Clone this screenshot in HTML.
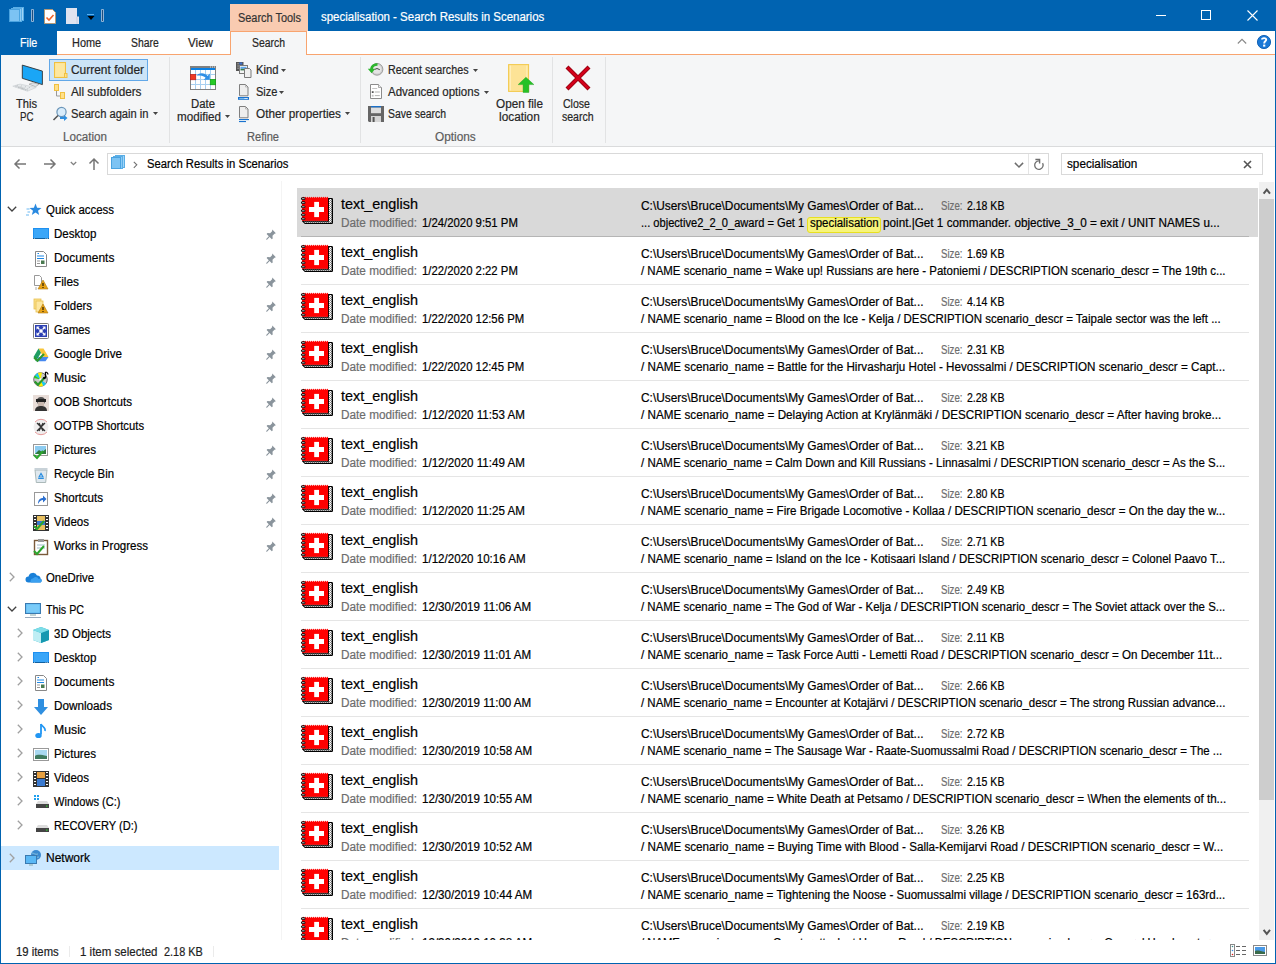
<!DOCTYPE html>
<html><head><meta charset="utf-8"><title>specialisation - Search Results in Scenarios</title>
<style>html,body{margin:0;padding:0;width:1276px;height:964px;overflow:hidden;background:#fff;}
#win{position:relative;width:1276px;height:964px;overflow:hidden;font-family:"Liberation Sans",sans-serif;}
.t{position:absolute;white-space:pre;transform-origin:0 0;-webkit-text-stroke:0.2px currentColor;}
.r{position:absolute;}
.i{position:absolute;overflow:visible;}
</style></head><body>
<div id="win">
<div class="r" style="left:0px;top:0px;width:1276px;height:964px;background:#fff;"></div><div class="r" style="left:0px;top:0px;width:1276px;height:31px;background:#0063b1;"></div><svg class="i" style="left:9px;top:6px;" width="16" height="16" viewBox="0 0 16 16">
<rect x="4.5" y="1.5" width="10" height="13" fill="#9fd4f7" stroke="#5aaee6"/>
<rect x="2.5" y="2.5" width="10" height="13" fill="#8ccbf5" stroke="#5aaee6"/>
<rect x="0.5" y="3.5" width="10" height="12" fill="#7cc3f3" stroke="#4aa3e0"/>
</svg><div class="r" style="left:31px;top:9px;width:3px;height:13px;background:#8fb3d6;border-radius:1px;"></div><div class="r" style="left:32px;top:10px;width:1px;height:11px;background:#1f4f7f;"></div><svg class="i" style="left:43px;top:8px;" width="14" height="17" viewBox="0 0 14 17">
<path d="M1.5 1.5h8l3 3v11h-11z" fill="#fff" stroke="#b59a78"/>
<path d="M3.5 9.5l2.5 2.5 4.5-5" fill="none" stroke="#f0642a" stroke-width="1.6"/>
</svg><svg class="i" style="left:66px;top:8px;" width="14" height="16" viewBox="0 0 14 16">
<path d="M0 0h11v8.5h2v7.5h-13z" fill="#dfe3f0"/>
<path d="M11 9v7" stroke="#c5cbe0"/>
</svg><div class="r" style="left:87px;top:14px;width:7px;height:1px;background:#5ab0f0;"></div><svg class="i" style="left:87px;top:15px;" width="8" height="6" viewBox="0 0 8 6"><path d="M0.5 1h7l-3.5 4z" fill="#000"/></svg><div class="r" style="left:101px;top:9px;width:3px;height:13px;background:#8fb3d6;border-radius:1px;"></div><div class="r" style="left:102px;top:10px;width:1px;height:11px;background:#1f4f7f;"></div><div class="t " style="left:321px;top:8.74px;font-size:12px;line-height:16px;color:#fff;transform:scaleX(0.9565);">specialisation - Search Results in Scenarios</div><div class="r" style="left:1156px;top:15px;width:10px;height:1px;background:#fff;"></div><div class="r" style="left:1201px;top:10px;width:10px;height:10px;background:transparent;box-sizing:border-box;border:1px solid #fff;"></div><svg class="i" style="left:1247px;top:10px;" width="11" height="11" viewBox="0 0 11 11"><path d="M0.5 0.5l10 10M10.5 0.5l-10 10" stroke="#fff" stroke-width="1.1"/></svg><div class="r" style="left:1px;top:31px;width:1274px;height:23px;background:#fff;"></div><div class="r" style="left:0px;top:31px;width:57px;height:24px;background:#0063b1;"></div><div class="t " style="left:20.3px;top:34.64px;font-size:12px;line-height:16px;color:#fff;transform:scaleX(0.8943);">File</div><div class="t " style="left:71.5px;top:34.64px;font-size:12px;line-height:16px;color:#262626;transform:scaleX(0.9089);">Home</div><div class="t " style="left:130.7px;top:34.64px;font-size:12px;line-height:16px;color:#262626;transform:scaleX(0.8648);">Share</div><div class="t " style="left:188px;top:34.64px;font-size:12px;line-height:16px;color:#262626;transform:scaleX(0.9691);">View</div><div class="r" style="left:230px;top:4px;width:78px;height:27px;background:#f9cbb1;"></div><div class="t " style="left:238px;top:9.64px;font-size:12px;line-height:16px;color:#333;transform:scaleX(0.9110);">Search Tools</div><div class="r" style="left:57px;top:54px;width:1218px;height:1px;background:#f8a46f;"></div><div class="r" style="left:230px;top:31px;width:77px;height:24px;background:#f5f6f7;box-sizing:border-box;border:1px solid #f8a46f;border-bottom:none;"></div><div class="t " style="left:251.5px;top:34.64px;font-size:12px;line-height:16px;color:#262626;transform:scaleX(0.8677);">Search</div><svg class="i" style="left:1237px;top:38px;" width="10" height="7" viewBox="0 0 10 7"><path d="M0.8 5.5l4.2-4.2 4.2 4.2" fill="none" stroke="#888" stroke-width="1.1"/></svg><svg class="i" style="left:1256px;top:34px;" width="16" height="16" viewBox="0 0 16 16"><circle cx="8" cy="8" r="6.6" fill="#1a78d6" stroke="#0b5cb2" stroke-width="0.9"/><path d="M6 5.6C6 3.8 10.2 3.6 10.2 5.6C10.2 7.2 8.2 7.3 8.2 9.2V9.6" fill="none" stroke="#fff" stroke-width="1.9"/><rect x="7.1" y="10.6" width="2.2" height="2" fill="#fff"/></svg><div class="r" style="left:1px;top:55px;width:1274px;height:91px;background:#f5f6f7;"></div><div class="r" style="left:1px;top:146px;width:1274px;height:1px;background:#dadbdc;"></div><div class="r" style="left:169px;top:57px;width:1px;height:86px;background:#e2e3e4;"></div><div class="r" style="left:360px;top:57px;width:1px;height:86px;background:#e2e3e4;"></div><div class="r" style="left:552px;top:57px;width:1px;height:86px;background:#e2e3e4;"></div><div class="r" style="left:605px;top:57px;width:1px;height:86px;background:#e2e3e4;"></div><svg class="i" style="left:12px;top:64px;" width="32" height="32" viewBox="0 0 32 32">
<path d="M10.3 1.1L30.4 7.1V20.6L10.3 14.3Z" fill="#1aa6f6" stroke="#333" stroke-width="0.9" stroke-linejoin="round"/>
<path d="M17 20.2l4-1.5 6 1.6-3.5 2.4z" fill="#dfe4e8" stroke="#888" stroke-width="0.5"/>
<path d="M0.8 22.2L8 20.1L24.2 23.5L15.5 27.2Z" fill="#e6e9eb" stroke="#c8ccd0" stroke-width="0.6"/>
<path d="M3.5 22l7.5 1.8M6 23.3l7.5 1.8M9 24.6l7 1.6M6 20.8l-3 2.5M10 21.6l-3.5 2.6M14 22.4l-4 2.7M18 23.2l-4.5 2.8" stroke="#a9aeb2" stroke-width="0.6" stroke-dasharray="1.2 0.8"/>
</svg><div class="t " style="left:16px;top:96.34px;font-size:12px;line-height:16px;color:#262626;transform:scaleX(0.9263);">This</div><div class="t " style="left:20px;top:108.84px;font-size:12px;line-height:16px;color:#262626;transform:scaleX(0.8097);">PC</div><div class="r" style="left:49px;top:59px;width:99px;height:22px;background:#cce4f7;box-sizing:border-box;border:1px solid #62a8e8;"></div><svg class="i" style="left:53px;top:61px;" width="16" height="18" viewBox="0 0 16 18">
<rect x="1.5" y="1.5" width="11" height="15" fill="#ffe08a" stroke="#f0c040"/>
<rect x="2.5" y="2.5" width="9" height="13" fill="#fde79f"/>
<rect x="11.5" y="12.5" width="2.5" height="4" fill="#ffe08a" stroke="#f0c040"/>
</svg><div class="t " style="left:71px;top:62.34px;font-size:12px;line-height:16px;color:#262626;transform:scaleX(0.9949);">Current folder</div><svg class="i" style="left:53px;top:84px;" width="14" height="16" viewBox="0 0 14 16">
<rect x="1.5" y="0.5" width="4" height="6" fill="#ffe08a" stroke="#f0c040"/>
<rect x="7.5" y="8.5" width="4" height="6" fill="#ffe08a" stroke="#f0c040"/>
<path d="M3.5 7v5h3.5" fill="none" stroke="#999"/>
</svg><div class="t " style="left:71px;top:83.84px;font-size:12px;line-height:16px;color:#262626;transform:scaleX(0.9785);">All subfolders</div><svg class="i" style="left:52px;top:106px;" width="16" height="16" viewBox="0 0 16 16">
<circle cx="9.5" cy="6" r="4.6" fill="#d8ecfb" stroke="#6a95b8" stroke-width="1.2"/>
<path d="M6 9.5l-4.5 4.5" stroke="#555" stroke-width="1.6"/>
<path d="M8 11h4v-2l3.5 3-3.5 3v-2h-4z" fill="#2f8fe0"/>
</svg><div class="t " style="left:71px;top:105.84px;font-size:12px;line-height:16px;color:#262626;transform:scaleX(0.9294);">Search again in</div><svg class="i" style="left:153px;top:112px;" width="6" height="4" viewBox="0 0 6 4"><path d="M0 0h5l-2.5 3z" fill="#444"/></svg><div class="t " style="left:63px;top:128.84px;font-size:12px;line-height:16px;color:#5c5c5c;transform:scaleX(0.9697);">Location</div><svg class="i" style="left:190px;top:66px;" width="26" height="24" viewBox="0 0 26 24">
<rect x="0.5" y="0.5" width="25" height="23" fill="#fff" stroke="#808080"/>
<rect x="0" y="0" width="26" height="2" fill="#808080"/>
<path d="M20 1h1M22 1h1M24 1h1" stroke="#fff" stroke-width="0.8"/>
<rect x="1" y="2" width="24" height="2" fill="#0a80e4"/>
<path d="M5.5 4v19M10.5 4v19M15.5 4v19M20.5 4v19M1 8.5h24M1 13.5h24M1 18.5h24" stroke="#a8d0f0" stroke-width="1"/>
<rect x="0.3" y="8.3" width="5.5" height="5.5" fill="#f03a22" stroke="#b81818" stroke-width="0.6"/>
<rect x="20.2" y="13.3" width="5.5" height="5.5" fill="#26cc26" stroke="#0c960c" stroke-width="0.6"/>
<path d="M6.5 9.5C9.5 6.2 15 6.5 17.6 10L19.8 7.5V13.8H13.6L15.8 11.8C13.5 9.6 9.8 9.2 6.5 9.5Z" fill="#2e8fe6"/>
</svg><div class="t " style="left:191px;top:96.24px;font-size:12px;line-height:16px;color:#262626;transform:scaleX(0.9464);">Date</div><div class="t " style="left:176.8px;top:108.84px;font-size:12px;line-height:16px;color:#262626;transform:scaleX(0.9700);">modified</div><svg class="i" style="left:225px;top:114.5px;" width="6" height="4" viewBox="0 0 6 4"><path d="M0 0h5l-2.5 3z" fill="#444"/></svg><svg class="i" style="left:235px;top:61px;" width="18" height="18" viewBox="0 0 18 18">
<rect x="1" y="1" width="7.5" height="9" fill="#555"/>
<path d="M2.6 2.8h.9M2.6 5h.9M2.6 7.2h.9" stroke="#fff" stroke-width="0.9"/>
<rect x="4.3" y="1.5" width="3" height="2" fill="#3a6fd0"/>
<rect x="4.5" y="4.5" width="8" height="8" fill="#f4f4f4" stroke="#7a7a7a"/>
<rect x="5.5" y="5.8" width="6" height="2" fill="#5aa8f0"/>
<rect x="5.5" y="7.8" width="4" height="1.6" fill="#3b7a4a"/>
<path d="M9.5 7.5h5l1.5 1.5v7.5h-6.5z" fill="#f0f0f0" stroke="#7a7a7a"/>
</svg><div class="t " style="left:255.6px;top:61.84px;font-size:12px;line-height:16px;color:#262626;transform:scaleX(0.9363);">Kind</div><svg class="i" style="left:281px;top:69px;" width="6" height="4" viewBox="0 0 6 4"><path d="M0 0h5l-2.5 3z" fill="#444"/></svg><svg class="i" style="left:237px;top:83px;" width="13" height="18" viewBox="0 0 13 18">
<path d="M2.5 1.5h6l2.5 2.5v8.8h-8.5z" fill="#eee" stroke="#7f7f7f"/>
<path d="M8.5 1.5v2.5h2.5" fill="none" stroke="#9a9a9a" stroke-width="0.6"/>
<rect x="1" y="14" width="11" height="2.8" fill="#1a73d0"/>
<rect x="2.2" y="15" width="5" height="0.8" fill="#8cc8f0"/>
<rect x="7.2" y="15" width="3.6" height="0.8" fill="#fff"/>
</svg><div class="t " style="left:255.6px;top:83.84px;font-size:12px;line-height:16px;color:#262626;transform:scaleX(0.9210);">Size</div><svg class="i" style="left:279px;top:91px;" width="6" height="4" viewBox="0 0 6 4"><path d="M0 0h5l-2.5 3z" fill="#444"/></svg><svg class="i" style="left:237px;top:105px;" width="13" height="18" viewBox="0 0 13 18">
<path d="M2.5 1.5h6l2.5 2.5v8.8h-8.5z" fill="#eee" stroke="#7f7f7f"/>
<path d="M8.5 1.5v2.5h2.5" fill="none" stroke="#9a9a9a" stroke-width="0.6"/>
<rect x="2" y="14" width="10" height="1.1" fill="#1a73d0"/>
<rect x="2" y="16" width="7" height="1.1" fill="#1a73d0"/>
</svg><div class="t " style="left:255.6px;top:105.84px;font-size:12px;line-height:16px;color:#262626;transform:scaleX(0.9802);">Other properties</div><svg class="i" style="left:345px;top:112px;" width="6" height="4" viewBox="0 0 6 4"><path d="M0 0h5l-2.5 3z" fill="#444"/></svg><div class="t " style="left:247.3px;top:128.84px;font-size:12px;line-height:16px;color:#5c5c5c;transform:scaleX(0.9225);">Refine</div><svg class="i" style="left:367px;top:62px;" width="17" height="15" viewBox="0 0 17 15">
<circle cx="10" cy="7.3" r="5.9" fill="#cfcfcf" stroke="#8a8a8a" stroke-width="0.8"/>
<circle cx="10" cy="7.3" r="4.3" fill="#e4e4e4"/>
<path d="M7.5 7.5l2.5-1 2.8 1.2" stroke="#333" stroke-width="0.9" fill="none"/>
<path d="M10.5 1.2C6 1.2 3.6 3.6 3.2 6.8H0.8L4.6 11.2L8.2 6.8H5.9C6.2 4.8 7.8 3.8 10.5 3.8Z" fill="#2cb52c"/>
</svg><div class="t " style="left:387.6px;top:61.84px;font-size:12px;line-height:16px;color:#262626;transform:scaleX(0.8940);">Recent searches</div><svg class="i" style="left:473px;top:69px;" width="6" height="4" viewBox="0 0 6 4"><path d="M0 0h5l-2.5 3z" fill="#444"/></svg><svg class="i" style="left:369px;top:83px;" width="14" height="18" viewBox="0 0 14 18">
<path d="M1.5 1.5h8l3 3v11h-11z" fill="#fff" stroke="#8c8c8c"/>
<path d="M9.5 1.5v3h3" fill="#eee" stroke="#8c8c8c" stroke-width="0.7"/>
<path d="M3.2 5.5h5" stroke="#bdbdbd" stroke-width="0.9"/>
<rect x="2.8" y="8.2" width="1.8" height="1.8" fill="#555"/>
<path d="M5.8 9h5" stroke="#aaa" stroke-width="0.9"/>
<rect x="2.8" y="11.8" width="1.8" height="1.8" fill="#c0c0c0"/>
<path d="M5.8 12.6h5" stroke="#aaa" stroke-width="0.9"/>
</svg><div class="t " style="left:387.6px;top:83.84px;font-size:12px;line-height:16px;color:#262626;transform:scaleX(0.9580);">Advanced options</div><svg class="i" style="left:484px;top:91px;" width="6" height="4" viewBox="0 0 6 4"><path d="M0 0h5l-2.5 3z" fill="#444"/></svg><svg class="i" style="left:368px;top:106px;" width="16" height="16" viewBox="0 0 16 16">
<path d="M0 0h16v16h-15l-1-1z" fill="#666"/>
<rect x="3" y="0" width="10" height="1.6" fill="#1a6fc8"/>
<rect x="3" y="1.6" width="10" height="5.6" fill="#dedede"/>
<rect x="3" y="10" width="10" height="6" fill="#d6d6d6"/>
<rect x="4.6" y="11" width="2" height="5" fill="#555"/>
</svg><div class="t " style="left:387.6px;top:105.84px;font-size:12px;line-height:16px;color:#262626;transform:scaleX(0.8695);">Save search</div><svg class="i" style="left:506px;top:63px;" width="30" height="30" viewBox="0 0 30 30">
<rect x="2.6" y="1.6" width="20" height="26.8" fill="#fde396" stroke="#f2c84a"/>
<path d="M4.3 2.5v25" stroke="#fff3c8" stroke-width="0.9"/>
<path d="M20.8 2.5v25" stroke="#fff3c8" stroke-width="0.7"/>
<path d="M17.1 29.5V21.6H12.2L19.9 14.2L27.9 21.6H22.8V29.5Z" fill="#26c126" stroke="#1a9a1a" stroke-width="0.4"/>
</svg><div class="t " style="left:495.6px;top:96.34px;font-size:12px;line-height:16px;color:#262626;transform:scaleX(0.9785);">Open file</div><div class="t " style="left:498.6px;top:108.84px;font-size:12px;line-height:16px;color:#262626;transform:scaleX(0.9861);">location</div><svg class="i" style="left:563px;top:63px;" width="30" height="30" viewBox="0 0 30 30">
<path d="M4 4l22 22M26 4l-22 22" stroke="#9a0010" stroke-width="4.2"/>
<path d="M4.6 4.6l20.8 20.8M25.4 4.6l-20.8 20.8" stroke="#d4001a" stroke-width="2.4"/>
</svg><div class="t " style="left:563px;top:96.34px;font-size:12px;line-height:16px;color:#262626;transform:scaleX(0.8798);">Close</div><div class="t " style="left:561.8px;top:108.84px;font-size:12px;line-height:16px;color:#262626;transform:scaleX(0.8770);">search</div><div class="t " style="left:434.5px;top:128.84px;font-size:12px;line-height:16px;color:#5c5c5c;transform:scaleX(0.9841);">Options</div><svg class="i" style="left:13px;top:158px;" width="14" height="12" viewBox="0 0 14 12"><path d="M13 6H2M6.5 1.5L2 6l4.5 4.5" fill="none" stroke="#757575" stroke-width="1.5"/></svg><svg class="i" style="left:43px;top:158px;" width="14" height="12" viewBox="0 0 14 12"><path d="M1 6h11M7.5 1.5L12 6l-4.5 4.5" fill="none" stroke="#757575" stroke-width="1.5"/></svg><svg class="i" style="left:70px;top:161px;" width="7" height="5" viewBox="0 0 7 5"><path d="M0.8 1l2.7 2.7L6.2 1" fill="none" stroke="#808080" stroke-width="1.3"/></svg><svg class="i" style="left:88px;top:157px;" width="12" height="13" viewBox="0 0 12 13"><path d="M6 13V2M1.5 6.5L6 2l4.5 4.5" fill="none" stroke="#757575" stroke-width="1.5"/></svg><div class="r" style="left:107px;top:153px;width:942px;height:22px;background:#fff;box-sizing:border-box;border:1px solid #d9d9d9;"></div><div class="r" style="left:1028px;top:154px;width:1px;height:20px;background:#e5e5e5;"></div><svg class="i" style="left:110px;top:154px;" width="16" height="16" viewBox="0 0 16 16">
<rect x="5.5" y="1.5" width="9" height="12" fill="#9fd4f7" stroke="#5aaee6"/>
<rect x="3.5" y="2.5" width="9" height="12" fill="#8ccbf5" stroke="#5aaee6"/>
<rect x="1.5" y="3.5" width="9" height="11" fill="#7cc3f3" stroke="#4aa3e0"/>
</svg><svg class="i" style="left:133px;top:161px;" width="5" height="8" viewBox="0 0 5 8"><path d="M0.8 0.8l3 3-3 3" fill="none" stroke="#707070" stroke-width="1.1"/></svg><div class="t " style="left:146.7px;top:156.34px;font-size:12px;line-height:16px;color:#000;transform:scaleX(0.9386);">Search Results in Scenarios</div><svg class="i" style="left:1014px;top:162px;" width="10" height="6" viewBox="0 0 10 6"><path d="M0.9 0.9l4.1 4.1 4.1-4.1" fill="none" stroke="#6d6d6d" stroke-width="1.5"/></svg><svg class="i" style="left:1033px;top:157px;" width="12" height="14" viewBox="0 0 12 14"><path d="M5.9 3.9A4.2 4.2 0 1 0 9.6 6.1" fill="none" stroke="#6d6d6d" stroke-width="1.3"/><path d="M2.4 2.5H6.6V6.6" fill="none" stroke="#6d6d6d" stroke-width="1.4"/></svg><div class="r" style="left:1061px;top:153px;width:202px;height:22px;background:#fff;box-sizing:border-box;border:1px solid #d9d9d9;"></div><div class="t " style="left:1067px;top:156.04px;font-size:12px;line-height:16px;color:#000;transform:scaleX(0.9771);">specialisation</div><svg class="i" style="left:1243px;top:160px;" width="9" height="9" viewBox="0 0 9 9"><path d="M1 1l7 7M8 1l-7 7" stroke="#555" stroke-width="1.6"/></svg><div class="r" style="left:281px;top:181px;width:1px;height:759px;background:#f4f4f4;"></div><svg class="i" style="left:7px;top:206px;" width="10" height="6" viewBox="0 0 10 6"><path d="M0.8 0.8l4.2 4.2 4.2-4.2" fill="none" stroke="#404040" stroke-width="1.3"/></svg><svg class="i" style="left:26px;top:203px;" width="16" height="14" viewBox="0 0 16 14"><path d="M9.5 0.5l1.6 4.2 4.4.2-3.5 2.8 1.2 4.3-3.7-2.5-3.7 2.5 1.2-4.3-3.5-2.8 4.4-.2z" fill="#2a8ae0"/><path d="M0.5 6h3M1.5 9h2.5M0 12h3" stroke="#5ab0f0" stroke-width="0.9"/></svg><div class="t " style="left:46px;top:202.24px;font-size:12px;line-height:16px;color:#000;transform:scaleX(0.9529);">Quick access</div><svg class="i" style="left:33px;top:226.8px;" width="16" height="16" viewBox="0 0 16 16"><rect x="0" y="1" width="16" height="11" fill="#1e90f0"/><rect x="1" y="2" width="14" height="9" fill="#3aa6f8"/><rect x="0" y="11" width="16" height="1" fill="#1060a0"/><path d="M1 11.5h.8M14 11.5h.8M12.5 11.5h.8" stroke="#fff" stroke-width="0.6"/></svg><div class="t " style="left:54.3px;top:226.24px;font-size:12px;line-height:16px;color:#000;transform:scaleX(0.9607);">Desktop</div><svg class="i" style="left:266px;top:229.0px;" width="10" height="10" viewBox="0 0 10 10"><path d="M6.3 0.6l3.6 3.6-1.4 0.6-2 2 .2 2.6-.9.9-2.2-2.2-2.6 2.6-.9-.1.1-.7 2.6-2.7-2.2-2.2.9-.9 2.6.2 2-2z" fill="#8a949c"/></svg><svg class="i" style="left:33px;top:250.79999999999998px;" width="16" height="16" viewBox="0 0 16 16"><path d="M2.5 0.5h8l3 3v12h-11z" fill="#fff" stroke="#888"/><path d="M4 5h7M4 7.5h7" stroke="#1e88e5"/><path d="M4 10h3M4 12.5h3" stroke="#999"/><rect x="8" y="9.5" width="3.5" height="3.5" fill="#4a7a50"/><path d="M4.5 2.5l1.5 0" stroke="#1e88e5"/></svg><div class="t " style="left:54.3px;top:250.24px;font-size:12px;line-height:16px;color:#000;transform:scaleX(0.9950);">Documents</div><svg class="i" style="left:266px;top:252.99999999999997px;" width="10" height="10" viewBox="0 0 10 10"><path d="M6.3 0.6l3.6 3.6-1.4 0.6-2 2 .2 2.6-.9.9-2.2-2.2-2.6 2.6-.9-.1.1-.7 2.6-2.7-2.2-2.2.9-.9 2.6.2 2-2z" fill="#8a949c"/></svg><svg class="i" style="left:33px;top:274.79999999999995px;" width="16" height="16" viewBox="0 0 16 16"><path d="M1.5 0.5h5l2 2v8h-7z" fill="#fff" stroke="#999"/><path d="M3 12v3" stroke="#aaa"/><path d="M10 5l5 9h-10z" fill="#e8a317" stroke="#b07a10" stroke-width="0.6"/><path d="M10 8v3M10 12v1" stroke="#000" stroke-width="1"/></svg><div class="t " style="left:54.3px;top:274.24px;font-size:12px;line-height:16px;color:#000;transform:scaleX(0.9864);">Files</div><svg class="i" style="left:266px;top:277.0px;" width="10" height="10" viewBox="0 0 10 10"><path d="M6.3 0.6l3.6 3.6-1.4 0.6-2 2 .2 2.6-.9.9-2.2-2.2-2.6 2.6-.9-.1.1-.7 2.6-2.7-2.2-2.2.9-.9 2.6.2 2-2z" fill="#8a949c"/></svg><svg class="i" style="left:33px;top:298.79999999999995px;" width="16" height="16" viewBox="0 0 16 16"><rect x="1" y="0" width="7" height="10" fill="#fbe08a" stroke="#e8c050" stroke-width="0.8"/><rect x="3" y="2" width="7" height="11" fill="#fde7a0" stroke="#e8c050" stroke-width="0.8"/><path d="M10 5l5 9h-10z" fill="#e8a317" stroke="#b07a10" stroke-width="0.6"/><path d="M10 8v3M10 12v1" stroke="#000" stroke-width="1"/></svg><div class="t " style="left:54.3px;top:298.24px;font-size:12px;line-height:16px;color:#000;transform:scaleX(0.9496);">Folders</div><svg class="i" style="left:266px;top:301.0px;" width="10" height="10" viewBox="0 0 10 10"><path d="M6.3 0.6l3.6 3.6-1.4 0.6-2 2 .2 2.6-.9.9-2.2-2.2-2.6 2.6-.9-.1.1-.7 2.6-2.7-2.2-2.2.9-.9 2.6.2 2-2z" fill="#8a949c"/></svg><svg class="i" style="left:33px;top:322.79999999999995px;" width="16" height="16" viewBox="0 0 16 16"><rect x="0.5" y="0.5" width="15" height="15" rx="1" fill="#fff" stroke="#7a7a7a"/><rect x="2" y="2" width="12" height="12" fill="#2b3fb2"/><path d="M3.5 3.5h3.2l-3.2 3.2zM12.5 3.5v3.2l-3.2-3.2zM3.5 12.5v-3.2l3.2 3.2zM12.5 12.5h-3.2l3.2-3.2z" fill="#fff"/><path d="M8 5.8l2.2 2.2-2.2 2.2-2.2-2.2z" fill="#fff"/><path d="M5 5l1.5 1.5M11 5l-1.5 1.5M5 11l1.5-1.5M11 11l-1.5-1.5" stroke="#fff" stroke-width="1.2"/></svg><div class="t " style="left:54.3px;top:322.24px;font-size:12px;line-height:16px;color:#000;transform:scaleX(0.9305);">Games</div><svg class="i" style="left:266px;top:325.0px;" width="10" height="10" viewBox="0 0 10 10"><path d="M6.3 0.6l3.6 3.6-1.4 0.6-2 2 .2 2.6-.9.9-2.2-2.2-2.6 2.6-.9-.1.1-.7 2.6-2.7-2.2-2.2.9-.9 2.6.2 2-2z" fill="#8a949c"/></svg><svg class="i" style="left:33px;top:346.79999999999995px;" width="16" height="16" viewBox="0 0 16 16"><path d="M5.5 1.5h5l5 8.5h-5z" fill="#f8c53a"/><path d="M5.5 1.5l-5 8.5 2.5 4.3 5-8.5z" fill="#1f9e63"/><path d="M3 14.3h9.5l3-4.3h-10z" fill="#4688f0"/><path d="M1.2 10.5l3.3 3.3 6.5-6.8" fill="none" stroke="#2f9a2f" stroke-width="2.2"/><path d="M1.2 10.5l3.3 3.3 6.5-6.8" fill="none" stroke="#fff" stroke-width="0.5" opacity="0"/></svg><div class="t " style="left:54.3px;top:346.24px;font-size:12px;line-height:16px;color:#000;transform:scaleX(0.9710);">Google Drive</div><svg class="i" style="left:266px;top:349.0px;" width="10" height="10" viewBox="0 0 10 10"><path d="M6.3 0.6l3.6 3.6-1.4 0.6-2 2 .2 2.6-.9.9-2.2-2.2-2.6 2.6-.9-.1.1-.7 2.6-2.7-2.2-2.2.9-.9 2.6.2 2-2z" fill="#8a949c"/></svg><svg class="i" style="left:33px;top:370.79999999999995px;" width="16" height="16" viewBox="0 0 16 16"><circle cx="7.5" cy="8.5" r="6.8" fill="#c8c8c8" stroke="#333" stroke-width="0.7"/><path d="M7.5 8.5L2 4.5A6.8 6.8 0 0 1 5 2z" fill="#18c8f0"/><path d="M7.5 8.5L5 2A6.8 6.8 0 0 1 9 1.7z" fill="#f8f000"/><path d="M7.5 8.5L2 4.5A6.8 6.8 0 0 0 1 7z" fill="#20d020"/><path d="M7.5 8.5L13 12.5A6.8 6.8 0 0 1 10 15z" fill="#18c8f0"/><path d="M7.5 8.5L10 15A6.8 6.8 0 0 1 6 15.3z" fill="#f8f000"/><circle cx="7.5" cy="8.5" r="1.2" fill="#fff"/><path d="M1.8 10.5l3.2 3.2 7-7.5" fill="none" stroke="#2a9a2a" stroke-width="2.2"/><path d="M12.5 1v6" stroke="#000" stroke-width="1.3"/><path d="M12.5 1c1 0 2.5 1 2.5 2.5" stroke="#000" stroke-width="1.1" fill="none"/><ellipse cx="11.3" cy="7" rx="1.5" ry="1.1" fill="#000"/></svg><div class="t " style="left:54.3px;top:370.24px;font-size:12px;line-height:16px;color:#000;transform:scaleX(1.0209);">Music</div><svg class="i" style="left:266px;top:373.0px;" width="10" height="10" viewBox="0 0 10 10"><path d="M6.3 0.6l3.6 3.6-1.4 0.6-2 2 .2 2.6-.9.9-2.2-2.2-2.6 2.6-.9-.1.1-.7 2.6-2.7-2.2-2.2.9-.9 2.6.2 2-2z" fill="#8a949c"/></svg><svg class="i" style="left:33px;top:394.79999999999995px;" width="16" height="16" viewBox="0 0 16 16"><rect x="0" y="0" width="16" height="16" fill="#e8ddd8"/><circle cx="8" cy="6" r="4" fill="#555"/><rect x="3" y="4" width="10" height="3" fill="#222"/><path d="M2 16c0-4 3-5 6-5s6 1 6 5z" fill="#333"/><rect x="5" y="7" width="6" height="4" fill="#c9b9b0"/></svg><div class="t " style="left:54.3px;top:394.24px;font-size:12px;line-height:16px;color:#000;transform:scaleX(0.9665);">OOB Shortcuts</div><svg class="i" style="left:266px;top:397.0px;" width="10" height="10" viewBox="0 0 10 10"><path d="M6.3 0.6l3.6 3.6-1.4 0.6-2 2 .2 2.6-.9.9-2.2-2.2-2.6 2.6-.9-.1.1-.7 2.6-2.7-2.2-2.2.9-.9 2.6.2 2-2z" fill="#8a949c"/></svg><svg class="i" style="left:33px;top:418.79999999999995px;" width="16" height="16" viewBox="0 0 16 16"><circle cx="8" cy="8" r="7.5" fill="#f0eeee"/><path d="M2 3a8 8 0 0 1 12 0M2 13a8 8 0 0 0 12 0" stroke="#e08080" stroke-width="0.8" fill="none"/><path d="M4 4l8 8M12 4l-8 8M6 4l4 8M10 4l-4 8" stroke="#333" stroke-width="1.2"/></svg><div class="t " style="left:54.3px;top:418.24px;font-size:12px;line-height:16px;color:#000;transform:scaleX(0.9372);">OOTPB Shortcuts</div><svg class="i" style="left:266px;top:421.0px;" width="10" height="10" viewBox="0 0 10 10"><path d="M6.3 0.6l3.6 3.6-1.4 0.6-2 2 .2 2.6-.9.9-2.2-2.2-2.6 2.6-.9-.1.1-.7 2.6-2.7-2.2-2.2.9-.9 2.6.2 2-2z" fill="#8a949c"/></svg><svg class="i" style="left:33px;top:442.79999999999995px;" width="16" height="16" viewBox="0 0 16 16"><rect x="0.5" y="1.5" width="14" height="11" fill="#fff" stroke="#999"/><rect x="2" y="3" width="11" height="8" fill="#8ccbf0"/><path d="M2 11l4-4 3 2 4-3v5z" fill="#2f7a3f"/><path d="M1 12l3 3 6-7" fill="none" stroke="#2ca52c" stroke-width="2"/></svg><div class="t " style="left:54.3px;top:442.24px;font-size:12px;line-height:16px;color:#000;transform:scaleX(0.9686);">Pictures</div><svg class="i" style="left:266px;top:445.0px;" width="10" height="10" viewBox="0 0 10 10"><path d="M6.3 0.6l3.6 3.6-1.4 0.6-2 2 .2 2.6-.9.9-2.2-2.2-2.6 2.6-.9-.1.1-.7 2.6-2.7-2.2-2.2.9-.9 2.6.2 2-2z" fill="#8a949c"/></svg><svg class="i" style="left:33px;top:466.79999999999995px;" width="16" height="16" viewBox="0 0 16 16"><path d="M2 3h12l-1.3 12.5h-9.4z" fill="#dfe8ee" stroke="#9aa" stroke-width="0.8"/><rect x="1.5" y="1" width="13" height="2.2" fill="#c8d2d8"/><path d="M6 10l2-3.5 2 3.5zM5.2 11.5h5.6" fill="none" stroke="#2a8ee0" stroke-width="1.2"/></svg><div class="t " style="left:54.3px;top:466.24px;font-size:12px;line-height:16px;color:#000;transform:scaleX(0.9470);">Recycle Bin</div><svg class="i" style="left:266px;top:469.0px;" width="10" height="10" viewBox="0 0 10 10"><path d="M6.3 0.6l3.6 3.6-1.4 0.6-2 2 .2 2.6-.9.9-2.2-2.2-2.6 2.6-.9-.1.1-.7 2.6-2.7-2.2-2.2.9-.9 2.6.2 2-2z" fill="#8a949c"/></svg><svg class="i" style="left:33px;top:490.79999999999995px;" width="16" height="16" viewBox="0 0 16 16"><rect x="1.5" y="1.5" width="13" height="13" fill="#fff" stroke="#999"/><path d="M5 13c0-4 2-6 5-6v-2.5l3.5 3.5-3.5 3.5v-2.5c-2 0-3.5 1.5-5 4z" fill="#2a6fd0"/></svg><div class="t " style="left:54.3px;top:490.24px;font-size:12px;line-height:16px;color:#000;transform:scaleX(0.9664);">Shortcuts</div><svg class="i" style="left:266px;top:493.0px;" width="10" height="10" viewBox="0 0 10 10"><path d="M6.3 0.6l3.6 3.6-1.4 0.6-2 2 .2 2.6-.9.9-2.2-2.2-2.6 2.6-.9-.1.1-.7 2.6-2.7-2.2-2.2.9-.9 2.6.2 2-2z" fill="#8a949c"/></svg><svg class="i" style="left:33px;top:514.8px;" width="16" height="16" viewBox="0 0 16 16"><rect x="0" y="0" width="16" height="16" fill="#333"/><path d="M1 1.5h2M1 4.5h2M1 7.5h2M1 10.5h2M1 13.5h2M13 1.5h2M13 4.5h2M13 7.5h2M13 10.5h2M13 13.5h2" stroke="#fff" stroke-width="1"/><rect x="4" y="1" width="8" height="14" fill="#e8c060"/><rect x="4" y="6" width="8" height="4" fill="#3a7ad0"/><path d="M1 11l3 3 7-8" fill="none" stroke="#2ca52c" stroke-width="2"/></svg><div class="t " style="left:54.3px;top:514.24px;font-size:12px;line-height:16px;color:#000;transform:scaleX(0.9593);">Videos</div><svg class="i" style="left:266px;top:517.0px;" width="10" height="10" viewBox="0 0 10 10"><path d="M6.3 0.6l3.6 3.6-1.4 0.6-2 2 .2 2.6-.9.9-2.2-2.2-2.6 2.6-.9-.1.1-.7 2.6-2.7-2.2-2.2.9-.9 2.6.2 2-2z" fill="#8a949c"/></svg><svg class="i" style="left:33px;top:538.8px;" width="16" height="16" viewBox="0 0 16 16"><rect x="1.5" y="1.5" width="13" height="14" fill="#fff" stroke="#7a5a3a" stroke-width="1.4"/><rect x="5" y="0" width="6" height="3" fill="#999"/><path d="M4 6h8M4 9h8" stroke="#8ab" stroke-width="0.8"/><path d="M1 12l3 3 7-8" fill="none" stroke="#2ca52c" stroke-width="2"/></svg><div class="t " style="left:54.3px;top:538.24px;font-size:12px;line-height:16px;color:#000;transform:scaleX(0.9610);">Works in Progress</div><svg class="i" style="left:266px;top:541.0px;" width="10" height="10" viewBox="0 0 10 10"><path d="M6.3 0.6l3.6 3.6-1.4 0.6-2 2 .2 2.6-.9.9-2.2-2.2-2.6 2.6-.9-.1.1-.7 2.6-2.7-2.2-2.2.9-.9 2.6.2 2-2z" fill="#8a949c"/></svg><svg class="i" style="left:9px;top:572px;" width="6" height="10" viewBox="0 0 6 10"><path d="M0.8 0.8l4.2 4.2-4.2 4.2" fill="none" stroke="#a0a0a0" stroke-width="1.3"/></svg><svg class="i" style="left:25px;top:573px;" width="16" height="10" viewBox="0 0 16 10"><path d="M3.5 9.5a3 3 0 0 1 0-6 4.5 4.5 0 0 1 8.5-1 3 3 0 0 1 3.5 3 2.2 2.2 0 0 1 0 4z" fill="#1a80d8"/><path d="M6 9.5a2.5 2.5 0 0 1 2-4 3 3 0 0 1 5.5 0.5 2 2 0 0 1 2 3.5z" fill="#3aa0f0"/></svg><div class="t " style="left:46px;top:570.24px;font-size:12px;line-height:16px;color:#000;transform:scaleX(0.9470);">OneDrive</div><svg class="i" style="left:7px;top:606px;" width="10" height="6" viewBox="0 0 10 6"><path d="M0.8 0.8l4.2 4.2 4.2-4.2" fill="none" stroke="#404040" stroke-width="1.3"/></svg><svg class="i" style="left:25px;top:603px;" width="16" height="15" viewBox="0 0 16 15"><rect x="0.5" y="0.5" width="15" height="10" fill="#5ab8f5" stroke="#3a7ab0"/><rect x="1.5" y="1.5" width="13" height="8" fill="#7acbf8"/><rect x="5" y="11.5" width="6" height="1" fill="#8aa"/><rect x="0" y="14" width="16" height="1" fill="#9ab"/></svg><div class="t " style="left:46px;top:602.24px;font-size:12px;line-height:16px;color:#000;transform:scaleX(0.8902);">This PC</div><svg class="i" style="left:17px;top:628.0px;" width="6" height="10" viewBox="0 0 6 10"><path d="M0.8 0.8l4.2 4.2-4.2 4.2" fill="none" stroke="#a0a0a0" stroke-width="1.3"/></svg><svg class="i" style="left:33px;top:626.8px;" width="16" height="16" viewBox="0 0 16 16"><path d="M8 0l8 3v10l-8 3-8-3v-10z" fill="#2bb5c9"/><path d="M0 3l8 3v10l-8-3z" fill="#bfeef4"/><path d="M8 6l8-3v10l-8 3z" fill="#1698b0"/><path d="M0 3l8-3 8 3-8 3z" fill="#7ddde8"/></svg><div class="t " style="left:54.3px;top:626.24px;font-size:12px;line-height:16px;color:#000;transform:scaleX(0.9603);">3D Objects</div><svg class="i" style="left:17px;top:652.0px;" width="6" height="10" viewBox="0 0 6 10"><path d="M0.8 0.8l4.2 4.2-4.2 4.2" fill="none" stroke="#a0a0a0" stroke-width="1.3"/></svg><svg class="i" style="left:33px;top:650.8px;" width="16" height="16" viewBox="0 0 16 16"><rect x="0" y="1" width="16" height="11" fill="#1e90f0"/><rect x="1" y="2" width="14" height="9" fill="#3aa6f8"/><rect x="0" y="11" width="16" height="1" fill="#1060a0"/><path d="M1 11.5h.8M14 11.5h.8M12.5 11.5h.8" stroke="#fff" stroke-width="0.6"/></svg><div class="t " style="left:54.3px;top:650.24px;font-size:12px;line-height:16px;color:#000;transform:scaleX(0.9607);">Desktop</div><svg class="i" style="left:17px;top:676.0px;" width="6" height="10" viewBox="0 0 6 10"><path d="M0.8 0.8l4.2 4.2-4.2 4.2" fill="none" stroke="#a0a0a0" stroke-width="1.3"/></svg><svg class="i" style="left:33px;top:674.8px;" width="16" height="16" viewBox="0 0 16 16"><path d="M2.5 0.5h8l3 3v12h-11z" fill="#fff" stroke="#888"/><path d="M4 5h7M4 7.5h7" stroke="#1e88e5"/><path d="M4 10h3M4 12.5h3" stroke="#999"/><rect x="8" y="9.5" width="3.5" height="3.5" fill="#4a7a50"/><path d="M4.5 2.5l1.5 0" stroke="#1e88e5"/></svg><div class="t " style="left:54.3px;top:674.24px;font-size:12px;line-height:16px;color:#000;transform:scaleX(0.9950);">Documents</div><svg class="i" style="left:17px;top:700.0px;" width="6" height="10" viewBox="0 0 6 10"><path d="M0.8 0.8l4.2 4.2-4.2 4.2" fill="none" stroke="#a0a0a0" stroke-width="1.3"/></svg><svg class="i" style="left:33px;top:698.8px;" width="16" height="16" viewBox="0 0 16 16"><path d="M5 0h6v8h4l-7 8-7-8h4z" fill="#2f8fe0"/></svg><div class="t " style="left:54.3px;top:698.24px;font-size:12px;line-height:16px;color:#000;transform:scaleX(0.9768);">Downloads</div><svg class="i" style="left:17px;top:724.0px;" width="6" height="10" viewBox="0 0 6 10"><path d="M0.8 0.8l4.2 4.2-4.2 4.2" fill="none" stroke="#a0a0a0" stroke-width="1.3"/></svg><svg class="i" style="left:33px;top:722.8px;" width="16" height="16" viewBox="0 0 16 16"><path d="M8 1v10.5" stroke="#2196f3" stroke-width="1.8"/><ellipse cx="5.5" cy="12.5" rx="3.2" ry="2.6" fill="#2196f3"/><path d="M8 1c1 3 5 3 4 7" fill="none" stroke="#2196f3" stroke-width="1.6"/></svg><div class="t " style="left:54.3px;top:722.24px;font-size:12px;line-height:16px;color:#000;transform:scaleX(1.0209);">Music</div><svg class="i" style="left:17px;top:748.0px;" width="6" height="10" viewBox="0 0 6 10"><path d="M0.8 0.8l4.2 4.2-4.2 4.2" fill="none" stroke="#a0a0a0" stroke-width="1.3"/></svg><svg class="i" style="left:33px;top:746.8px;" width="16" height="16" viewBox="0 0 16 16"><rect x="0.5" y="1.5" width="15" height="12" fill="#fff" stroke="#999"/><rect x="2" y="3" width="12" height="9" fill="#a8d8f0"/><path d="M2 9c3-2 6-1 12 0v3h-12z" fill="#3f7a5f"/></svg><div class="t " style="left:54.3px;top:746.24px;font-size:12px;line-height:16px;color:#000;transform:scaleX(0.9686);">Pictures</div><svg class="i" style="left:17px;top:772.0px;" width="6" height="10" viewBox="0 0 6 10"><path d="M0.8 0.8l4.2 4.2-4.2 4.2" fill="none" stroke="#a0a0a0" stroke-width="1.3"/></svg><svg class="i" style="left:33px;top:770.8px;" width="16" height="16" viewBox="0 0 16 16"><rect x="0" y="0" width="16" height="16" fill="#333"/><path d="M1 1.5h2M1 4.5h2M1 7.5h2M1 10.5h2M1 13.5h2M13 1.5h2M13 4.5h2M13 7.5h2M13 10.5h2M13 13.5h2" stroke="#fff" stroke-width="1"/><rect x="4" y="1" width="8" height="6" fill="#e8a040"/><rect x="4" y="8" width="8" height="7" fill="#3a7ad0"/></svg><div class="t " style="left:54.3px;top:770.24px;font-size:12px;line-height:16px;color:#000;transform:scaleX(0.9593);">Videos</div><svg class="i" style="left:17px;top:796.0px;" width="6" height="10" viewBox="0 0 6 10"><path d="M0.8 0.8l4.2 4.2-4.2 4.2" fill="none" stroke="#a0a0a0" stroke-width="1.3"/></svg><svg class="i" style="left:33px;top:794.8px;" width="16" height="16" viewBox="0 0 16 16"><path d="M1 0h2v2h-2zM4 0h2v2h-2zM1 3h2v2h-2zM4 3h2v2h-2z" fill="#1ea0f0"/><path d="M3 9l2-3h9l2 3z" fill="#ddd"/><rect x="3" y="9" width="13" height="4" fill="#444"/><rect x="13" y="10.5" width="1.5" height="1.2" fill="#3c3"/></svg><div class="t " style="left:54.3px;top:794.24px;font-size:12px;line-height:16px;color:#000;transform:scaleX(0.9234);">Windows (C:)</div><svg class="i" style="left:17px;top:820.0px;" width="6" height="10" viewBox="0 0 6 10"><path d="M0.8 0.8l4.2 4.2-4.2 4.2" fill="none" stroke="#a0a0a0" stroke-width="1.3"/></svg><svg class="i" style="left:33px;top:818.8px;" width="16" height="16" viewBox="0 0 16 16"><path d="M3 9l2-3h9l2 3z" fill="#ddd"/><rect x="3" y="9" width="13" height="4" fill="#444"/><rect x="13" y="10.5" width="1.5" height="1.2" fill="#3c3"/></svg><div class="t " style="left:54.3px;top:818.24px;font-size:12px;line-height:16px;color:#000;transform:scaleX(0.9252);">RECOVERY (D:)</div><div class="r" style="left:1px;top:846px;width:278px;height:24px;background:#cce8ff;"></div><svg class="i" style="left:9px;top:853px;" width="6" height="10" viewBox="0 0 6 10"><path d="M0.8 0.8l4.2 4.2-4.2 4.2" fill="none" stroke="#a0a0a0" stroke-width="1.3"/></svg><svg class="i" style="left:25px;top:850px;" width="16" height="16" viewBox="0 0 16 16"><circle cx="11" cy="5" r="5" fill="#3a8ad0"/><path d="M7 3c2 0 3 2 6 1M8 7c2-1 3 1 6 0" stroke="#9cd" stroke-width="0.8" fill="none"/><rect x="0.5" y="5.5" width="11" height="8" fill="#5ab8f5" stroke="#3a7ab0"/><rect x="4" y="14.5" width="4" height="1" fill="#8aa"/></svg><div class="t " style="left:46.1px;top:850.24px;font-size:12px;line-height:16px;color:#000;transform:scaleX(0.9996);">Network</div><div class="r" style="left:282px;top:181px;width:977px;height:759px;overflow:hidden;"><div class="r" style="left:15px;top:7px;width:961px;height:49px;background:#d9d9d9;"></div><div class="r" style="left:19px;top:55px;width:948px;height:1px;background:#b5b5b5;"></div><svg class="i" style="left:18px;top:15px;" width="33" height="28" viewBox="0 0 33 28">
<defs><pattern id="pg" width="2" height="2" patternUnits="userSpaceOnUse"><rect width="2" height="2" fill="#fff"/><rect width="1" height="1" fill="#888"/><rect x="1" y="1" width="1" height="1" fill="#888"/></pattern></defs>
<path d="M27.5 1.9H31.7Q33 1.9 33 3.2V26.7Q33 28 31.7 28H4.8L2 25.2V24.5H27.5Z" fill="#000"/>
<path d="M29 3.1H31.7V26.8H4.7L3.9 25.8H29Z" fill="url(#pg)"/>
<rect x="2" y="1.6" width="26.1" height="23.2" fill="#f00"/>
<path d="M3 1.4h25" stroke="#f00" stroke-width="1" stroke-dasharray="1 1"/>
<rect x="14.2" y="5.9" width="4.8" height="15.2" fill="#fff"/>
<rect x="9" y="11" width="15" height="5" fill="#fff"/>
<ellipse cx="3.2" cy="2.70" rx="2.3" ry="1.35" fill="#000"/><path d="M2 2.70H4.6" stroke="#fff" stroke-width="0.75"/><ellipse cx="3.2" cy="6.70" rx="2.3" ry="1.35" fill="#000"/><path d="M2 6.70H4.6" stroke="#fff" stroke-width="0.75"/><ellipse cx="3.2" cy="10.80" rx="2.3" ry="1.35" fill="#000"/><path d="M2 10.80H4.6" stroke="#fff" stroke-width="0.75"/><ellipse cx="3.2" cy="14.80" rx="2.3" ry="1.35" fill="#000"/><path d="M2 14.80H4.6" stroke="#fff" stroke-width="0.75"/><ellipse cx="3.2" cy="18.80" rx="2.3" ry="1.35" fill="#000"/><path d="M2 18.80H4.6" stroke="#fff" stroke-width="0.75"/><ellipse cx="3.2" cy="22.80" rx="2.3" ry="1.35" fill="#000"/><path d="M2 22.80H4.6" stroke="#fff" stroke-width="0.75"/>
</svg><div class="t " style="left:58.60000000000002px;top:14.47px;font-size:14.5px;line-height:19px;color:#000;transform:scaleX(0.9950);">text_english</div><div class="t " style="left:58.60000000000002px;top:33.64px;font-size:12px;line-height:16px;color:#6d6d6d;transform:scaleX(0.9822);">Date modified:</div><div class="t " style="left:140.39999999999998px;top:33.64px;font-size:12px;line-height:16px;color:#000;transform:scaleX(0.945);">1/24/2020 9:51 PM</div><div class="t " style="left:358.70000000000005px;top:16.84px;font-size:12px;line-height:16px;color:#000;transform:scaleX(0.9898);">C:\Users\Bruce\Documents\My Games\Order of Bat...</div><div class="t " style="left:658.5px;top:16.84px;font-size:12px;line-height:16px;color:#6d6d6d;transform:scaleX(0.8056);">Size:</div><div class="t " style="left:685px;top:16.84px;font-size:12px;line-height:16px;color:#000;transform:scaleX(0.8758);">2.18 KB</div><div class="t " style="left:358.70000000000005px;top:33.64px;font-size:12px;line-height:16px;color:#000;transform:scaleX(0.9249);">... objective2_2_0_award = Get 1 </div><div class="r" style="left:525px;top:36px;width:74px;height:16px;background:#f7f47a;box-sizing:border-box;border:1px solid #e8e020;border-radius:3px;"></div><div class="t " style="left:527.6px;top:33.64px;font-size:12px;line-height:16px;color:#000;transform:scaleX(0.9535);">specialisation</div><div class="t " style="left:601.3px;top:33.64px;font-size:12px;line-height:16px;color:#000;transform:scaleX(0.9767);">point.|Get 1 commander. objective_3_0 = exit / UNIT NAMES u...</div><div class="r" style="left:19px;top:103px;width:948px;height:1px;background:#e5e5e5;"></div><svg class="i" style="left:18px;top:63px;" width="33" height="28" viewBox="0 0 33 28">
<defs><pattern id="pg" width="2" height="2" patternUnits="userSpaceOnUse"><rect width="2" height="2" fill="#fff"/><rect width="1" height="1" fill="#888"/><rect x="1" y="1" width="1" height="1" fill="#888"/></pattern></defs>
<path d="M27.5 1.9H31.7Q33 1.9 33 3.2V26.7Q33 28 31.7 28H4.8L2 25.2V24.5H27.5Z" fill="#000"/>
<path d="M29 3.1H31.7V26.8H4.7L3.9 25.8H29Z" fill="url(#pg)"/>
<rect x="2" y="1.6" width="26.1" height="23.2" fill="#f00"/>
<path d="M3 1.4h25" stroke="#f00" stroke-width="1" stroke-dasharray="1 1"/>
<rect x="14.2" y="5.9" width="4.8" height="15.2" fill="#fff"/>
<rect x="9" y="11" width="15" height="5" fill="#fff"/>
<ellipse cx="3.2" cy="2.70" rx="2.3" ry="1.35" fill="#000"/><path d="M2 2.70H4.6" stroke="#fff" stroke-width="0.75"/><ellipse cx="3.2" cy="6.70" rx="2.3" ry="1.35" fill="#000"/><path d="M2 6.70H4.6" stroke="#fff" stroke-width="0.75"/><ellipse cx="3.2" cy="10.80" rx="2.3" ry="1.35" fill="#000"/><path d="M2 10.80H4.6" stroke="#fff" stroke-width="0.75"/><ellipse cx="3.2" cy="14.80" rx="2.3" ry="1.35" fill="#000"/><path d="M2 14.80H4.6" stroke="#fff" stroke-width="0.75"/><ellipse cx="3.2" cy="18.80" rx="2.3" ry="1.35" fill="#000"/><path d="M2 18.80H4.6" stroke="#fff" stroke-width="0.75"/><ellipse cx="3.2" cy="22.80" rx="2.3" ry="1.35" fill="#000"/><path d="M2 22.80H4.6" stroke="#fff" stroke-width="0.75"/>
</svg><div class="t " style="left:58.60000000000002px;top:62.47px;font-size:14.5px;line-height:19px;color:#000;transform:scaleX(0.9950);">text_english</div><div class="t " style="left:58.60000000000002px;top:81.64px;font-size:12px;line-height:16px;color:#6d6d6d;transform:scaleX(0.9822);">Date modified:</div><div class="t " style="left:140.39999999999998px;top:81.64px;font-size:12px;line-height:16px;color:#000;transform:scaleX(0.945);">1/22/2020 2:22 PM</div><div class="t " style="left:358.70000000000005px;top:64.84px;font-size:12px;line-height:16px;color:#000;transform:scaleX(0.9898);">C:\Users\Bruce\Documents\My Games\Order of Bat...</div><div class="t " style="left:658.5px;top:64.84px;font-size:12px;line-height:16px;color:#6d6d6d;transform:scaleX(0.8056);">Size:</div><div class="t " style="left:685px;top:64.84px;font-size:12px;line-height:16px;color:#000;transform:scaleX(0.8758);">1.69 KB</div><div class="t " style="left:358.70000000000005px;top:81.64px;font-size:12px;line-height:16px;color:#000;transform:scaleX(0.9547);">/ NAME scenario_name = Wake up! Russians are here - Patoniemi / DESCRIPTION scenario_descr = The 19th c...</div><div class="r" style="left:19px;top:151px;width:948px;height:1px;background:#e5e5e5;"></div><svg class="i" style="left:18px;top:111px;" width="33" height="28" viewBox="0 0 33 28">
<defs><pattern id="pg" width="2" height="2" patternUnits="userSpaceOnUse"><rect width="2" height="2" fill="#fff"/><rect width="1" height="1" fill="#888"/><rect x="1" y="1" width="1" height="1" fill="#888"/></pattern></defs>
<path d="M27.5 1.9H31.7Q33 1.9 33 3.2V26.7Q33 28 31.7 28H4.8L2 25.2V24.5H27.5Z" fill="#000"/>
<path d="M29 3.1H31.7V26.8H4.7L3.9 25.8H29Z" fill="url(#pg)"/>
<rect x="2" y="1.6" width="26.1" height="23.2" fill="#f00"/>
<path d="M3 1.4h25" stroke="#f00" stroke-width="1" stroke-dasharray="1 1"/>
<rect x="14.2" y="5.9" width="4.8" height="15.2" fill="#fff"/>
<rect x="9" y="11" width="15" height="5" fill="#fff"/>
<ellipse cx="3.2" cy="2.70" rx="2.3" ry="1.35" fill="#000"/><path d="M2 2.70H4.6" stroke="#fff" stroke-width="0.75"/><ellipse cx="3.2" cy="6.70" rx="2.3" ry="1.35" fill="#000"/><path d="M2 6.70H4.6" stroke="#fff" stroke-width="0.75"/><ellipse cx="3.2" cy="10.80" rx="2.3" ry="1.35" fill="#000"/><path d="M2 10.80H4.6" stroke="#fff" stroke-width="0.75"/><ellipse cx="3.2" cy="14.80" rx="2.3" ry="1.35" fill="#000"/><path d="M2 14.80H4.6" stroke="#fff" stroke-width="0.75"/><ellipse cx="3.2" cy="18.80" rx="2.3" ry="1.35" fill="#000"/><path d="M2 18.80H4.6" stroke="#fff" stroke-width="0.75"/><ellipse cx="3.2" cy="22.80" rx="2.3" ry="1.35" fill="#000"/><path d="M2 22.80H4.6" stroke="#fff" stroke-width="0.75"/>
</svg><div class="t " style="left:58.60000000000002px;top:110.47px;font-size:14.5px;line-height:19px;color:#000;transform:scaleX(0.9950);">text_english</div><div class="t " style="left:58.60000000000002px;top:129.64px;font-size:12px;line-height:16px;color:#6d6d6d;transform:scaleX(0.9822);">Date modified:</div><div class="t " style="left:140.39999999999998px;top:129.64px;font-size:12px;line-height:16px;color:#000;transform:scaleX(0.945);">1/22/2020 12:56 PM</div><div class="t " style="left:358.70000000000005px;top:112.84px;font-size:12px;line-height:16px;color:#000;transform:scaleX(0.9898);">C:\Users\Bruce\Documents\My Games\Order of Bat...</div><div class="t " style="left:658.5px;top:112.84px;font-size:12px;line-height:16px;color:#6d6d6d;transform:scaleX(0.8056);">Size:</div><div class="t " style="left:685px;top:112.84px;font-size:12px;line-height:16px;color:#000;transform:scaleX(0.8758);">4.14 KB</div><div class="t " style="left:358.70000000000005px;top:129.64px;font-size:12px;line-height:16px;color:#000;transform:scaleX(0.9565);">/ NAME scenario_name = Blood on the Ice - Kelja / DESCRIPTION scenario_descr = Taipale sector was the left ...</div><div class="r" style="left:19px;top:199px;width:948px;height:1px;background:#e5e5e5;"></div><svg class="i" style="left:18px;top:159px;" width="33" height="28" viewBox="0 0 33 28">
<defs><pattern id="pg" width="2" height="2" patternUnits="userSpaceOnUse"><rect width="2" height="2" fill="#fff"/><rect width="1" height="1" fill="#888"/><rect x="1" y="1" width="1" height="1" fill="#888"/></pattern></defs>
<path d="M27.5 1.9H31.7Q33 1.9 33 3.2V26.7Q33 28 31.7 28H4.8L2 25.2V24.5H27.5Z" fill="#000"/>
<path d="M29 3.1H31.7V26.8H4.7L3.9 25.8H29Z" fill="url(#pg)"/>
<rect x="2" y="1.6" width="26.1" height="23.2" fill="#f00"/>
<path d="M3 1.4h25" stroke="#f00" stroke-width="1" stroke-dasharray="1 1"/>
<rect x="14.2" y="5.9" width="4.8" height="15.2" fill="#fff"/>
<rect x="9" y="11" width="15" height="5" fill="#fff"/>
<ellipse cx="3.2" cy="2.70" rx="2.3" ry="1.35" fill="#000"/><path d="M2 2.70H4.6" stroke="#fff" stroke-width="0.75"/><ellipse cx="3.2" cy="6.70" rx="2.3" ry="1.35" fill="#000"/><path d="M2 6.70H4.6" stroke="#fff" stroke-width="0.75"/><ellipse cx="3.2" cy="10.80" rx="2.3" ry="1.35" fill="#000"/><path d="M2 10.80H4.6" stroke="#fff" stroke-width="0.75"/><ellipse cx="3.2" cy="14.80" rx="2.3" ry="1.35" fill="#000"/><path d="M2 14.80H4.6" stroke="#fff" stroke-width="0.75"/><ellipse cx="3.2" cy="18.80" rx="2.3" ry="1.35" fill="#000"/><path d="M2 18.80H4.6" stroke="#fff" stroke-width="0.75"/><ellipse cx="3.2" cy="22.80" rx="2.3" ry="1.35" fill="#000"/><path d="M2 22.80H4.6" stroke="#fff" stroke-width="0.75"/>
</svg><div class="t " style="left:58.60000000000002px;top:158.47px;font-size:14.5px;line-height:19px;color:#000;transform:scaleX(0.9950);">text_english</div><div class="t " style="left:58.60000000000002px;top:177.64px;font-size:12px;line-height:16px;color:#6d6d6d;transform:scaleX(0.9822);">Date modified:</div><div class="t " style="left:140.39999999999998px;top:177.64px;font-size:12px;line-height:16px;color:#000;transform:scaleX(0.945);">1/22/2020 12:45 PM</div><div class="t " style="left:358.70000000000005px;top:160.84px;font-size:12px;line-height:16px;color:#000;transform:scaleX(0.9898);">C:\Users\Bruce\Documents\My Games\Order of Bat...</div><div class="t " style="left:658.5px;top:160.84px;font-size:12px;line-height:16px;color:#6d6d6d;transform:scaleX(0.8056);">Size:</div><div class="t " style="left:685px;top:160.84px;font-size:12px;line-height:16px;color:#000;transform:scaleX(0.8758);">2.31 KB</div><div class="t " style="left:358.70000000000005px;top:177.64px;font-size:12px;line-height:16px;color:#000;transform:scaleX(0.9702);">/ NAME scenario_name = Battle for the Hirvasharju Hotel - Hevossalmi / DESCRIPTION scenario_descr = Capt...</div><div class="r" style="left:19px;top:247px;width:948px;height:1px;background:#e5e5e5;"></div><svg class="i" style="left:18px;top:207px;" width="33" height="28" viewBox="0 0 33 28">
<defs><pattern id="pg" width="2" height="2" patternUnits="userSpaceOnUse"><rect width="2" height="2" fill="#fff"/><rect width="1" height="1" fill="#888"/><rect x="1" y="1" width="1" height="1" fill="#888"/></pattern></defs>
<path d="M27.5 1.9H31.7Q33 1.9 33 3.2V26.7Q33 28 31.7 28H4.8L2 25.2V24.5H27.5Z" fill="#000"/>
<path d="M29 3.1H31.7V26.8H4.7L3.9 25.8H29Z" fill="url(#pg)"/>
<rect x="2" y="1.6" width="26.1" height="23.2" fill="#f00"/>
<path d="M3 1.4h25" stroke="#f00" stroke-width="1" stroke-dasharray="1 1"/>
<rect x="14.2" y="5.9" width="4.8" height="15.2" fill="#fff"/>
<rect x="9" y="11" width="15" height="5" fill="#fff"/>
<ellipse cx="3.2" cy="2.70" rx="2.3" ry="1.35" fill="#000"/><path d="M2 2.70H4.6" stroke="#fff" stroke-width="0.75"/><ellipse cx="3.2" cy="6.70" rx="2.3" ry="1.35" fill="#000"/><path d="M2 6.70H4.6" stroke="#fff" stroke-width="0.75"/><ellipse cx="3.2" cy="10.80" rx="2.3" ry="1.35" fill="#000"/><path d="M2 10.80H4.6" stroke="#fff" stroke-width="0.75"/><ellipse cx="3.2" cy="14.80" rx="2.3" ry="1.35" fill="#000"/><path d="M2 14.80H4.6" stroke="#fff" stroke-width="0.75"/><ellipse cx="3.2" cy="18.80" rx="2.3" ry="1.35" fill="#000"/><path d="M2 18.80H4.6" stroke="#fff" stroke-width="0.75"/><ellipse cx="3.2" cy="22.80" rx="2.3" ry="1.35" fill="#000"/><path d="M2 22.80H4.6" stroke="#fff" stroke-width="0.75"/>
</svg><div class="t " style="left:58.60000000000002px;top:206.47px;font-size:14.5px;line-height:19px;color:#000;transform:scaleX(0.9950);">text_english</div><div class="t " style="left:58.60000000000002px;top:225.64px;font-size:12px;line-height:16px;color:#6d6d6d;transform:scaleX(0.9822);">Date modified:</div><div class="t " style="left:140.39999999999998px;top:225.64px;font-size:12px;line-height:16px;color:#000;transform:scaleX(0.965);">1/12/2020 11:53 AM</div><div class="t " style="left:358.70000000000005px;top:208.84px;font-size:12px;line-height:16px;color:#000;transform:scaleX(0.9898);">C:\Users\Bruce\Documents\My Games\Order of Bat...</div><div class="t " style="left:658.5px;top:208.84px;font-size:12px;line-height:16px;color:#6d6d6d;transform:scaleX(0.8056);">Size:</div><div class="t " style="left:685px;top:208.84px;font-size:12px;line-height:16px;color:#000;transform:scaleX(0.8758);">2.28 KB</div><div class="t " style="left:358.70000000000005px;top:225.64px;font-size:12px;line-height:16px;color:#000;transform:scaleX(0.9732);">/ NAME scenario_name = Delaying Action at Krylänmäki / DESCRIPTION scenario_descr = After having broke...</div><div class="r" style="left:19px;top:295px;width:948px;height:1px;background:#e5e5e5;"></div><svg class="i" style="left:18px;top:255px;" width="33" height="28" viewBox="0 0 33 28">
<defs><pattern id="pg" width="2" height="2" patternUnits="userSpaceOnUse"><rect width="2" height="2" fill="#fff"/><rect width="1" height="1" fill="#888"/><rect x="1" y="1" width="1" height="1" fill="#888"/></pattern></defs>
<path d="M27.5 1.9H31.7Q33 1.9 33 3.2V26.7Q33 28 31.7 28H4.8L2 25.2V24.5H27.5Z" fill="#000"/>
<path d="M29 3.1H31.7V26.8H4.7L3.9 25.8H29Z" fill="url(#pg)"/>
<rect x="2" y="1.6" width="26.1" height="23.2" fill="#f00"/>
<path d="M3 1.4h25" stroke="#f00" stroke-width="1" stroke-dasharray="1 1"/>
<rect x="14.2" y="5.9" width="4.8" height="15.2" fill="#fff"/>
<rect x="9" y="11" width="15" height="5" fill="#fff"/>
<ellipse cx="3.2" cy="2.70" rx="2.3" ry="1.35" fill="#000"/><path d="M2 2.70H4.6" stroke="#fff" stroke-width="0.75"/><ellipse cx="3.2" cy="6.70" rx="2.3" ry="1.35" fill="#000"/><path d="M2 6.70H4.6" stroke="#fff" stroke-width="0.75"/><ellipse cx="3.2" cy="10.80" rx="2.3" ry="1.35" fill="#000"/><path d="M2 10.80H4.6" stroke="#fff" stroke-width="0.75"/><ellipse cx="3.2" cy="14.80" rx="2.3" ry="1.35" fill="#000"/><path d="M2 14.80H4.6" stroke="#fff" stroke-width="0.75"/><ellipse cx="3.2" cy="18.80" rx="2.3" ry="1.35" fill="#000"/><path d="M2 18.80H4.6" stroke="#fff" stroke-width="0.75"/><ellipse cx="3.2" cy="22.80" rx="2.3" ry="1.35" fill="#000"/><path d="M2 22.80H4.6" stroke="#fff" stroke-width="0.75"/>
</svg><div class="t " style="left:58.60000000000002px;top:254.47px;font-size:14.5px;line-height:19px;color:#000;transform:scaleX(0.9950);">text_english</div><div class="t " style="left:58.60000000000002px;top:273.64px;font-size:12px;line-height:16px;color:#6d6d6d;transform:scaleX(0.9822);">Date modified:</div><div class="t " style="left:140.39999999999998px;top:273.64px;font-size:12px;line-height:16px;color:#000;transform:scaleX(0.965);">1/12/2020 11:49 AM</div><div class="t " style="left:358.70000000000005px;top:256.84px;font-size:12px;line-height:16px;color:#000;transform:scaleX(0.9898);">C:\Users\Bruce\Documents\My Games\Order of Bat...</div><div class="t " style="left:658.5px;top:256.84px;font-size:12px;line-height:16px;color:#6d6d6d;transform:scaleX(0.8056);">Size:</div><div class="t " style="left:685px;top:256.84px;font-size:12px;line-height:16px;color:#000;transform:scaleX(0.8758);">3.21 KB</div><div class="t " style="left:358.70000000000005px;top:273.64px;font-size:12px;line-height:16px;color:#000;transform:scaleX(0.9564);">/ NAME scenario_name = Calm Down and Kill Russians - Linnasalmi / DESCRIPTION scenario_descr = As the S...</div><div class="r" style="left:19px;top:343px;width:948px;height:1px;background:#e5e5e5;"></div><svg class="i" style="left:18px;top:303px;" width="33" height="28" viewBox="0 0 33 28">
<defs><pattern id="pg" width="2" height="2" patternUnits="userSpaceOnUse"><rect width="2" height="2" fill="#fff"/><rect width="1" height="1" fill="#888"/><rect x="1" y="1" width="1" height="1" fill="#888"/></pattern></defs>
<path d="M27.5 1.9H31.7Q33 1.9 33 3.2V26.7Q33 28 31.7 28H4.8L2 25.2V24.5H27.5Z" fill="#000"/>
<path d="M29 3.1H31.7V26.8H4.7L3.9 25.8H29Z" fill="url(#pg)"/>
<rect x="2" y="1.6" width="26.1" height="23.2" fill="#f00"/>
<path d="M3 1.4h25" stroke="#f00" stroke-width="1" stroke-dasharray="1 1"/>
<rect x="14.2" y="5.9" width="4.8" height="15.2" fill="#fff"/>
<rect x="9" y="11" width="15" height="5" fill="#fff"/>
<ellipse cx="3.2" cy="2.70" rx="2.3" ry="1.35" fill="#000"/><path d="M2 2.70H4.6" stroke="#fff" stroke-width="0.75"/><ellipse cx="3.2" cy="6.70" rx="2.3" ry="1.35" fill="#000"/><path d="M2 6.70H4.6" stroke="#fff" stroke-width="0.75"/><ellipse cx="3.2" cy="10.80" rx="2.3" ry="1.35" fill="#000"/><path d="M2 10.80H4.6" stroke="#fff" stroke-width="0.75"/><ellipse cx="3.2" cy="14.80" rx="2.3" ry="1.35" fill="#000"/><path d="M2 14.80H4.6" stroke="#fff" stroke-width="0.75"/><ellipse cx="3.2" cy="18.80" rx="2.3" ry="1.35" fill="#000"/><path d="M2 18.80H4.6" stroke="#fff" stroke-width="0.75"/><ellipse cx="3.2" cy="22.80" rx="2.3" ry="1.35" fill="#000"/><path d="M2 22.80H4.6" stroke="#fff" stroke-width="0.75"/>
</svg><div class="t " style="left:58.60000000000002px;top:302.47px;font-size:14.5px;line-height:19px;color:#000;transform:scaleX(0.9950);">text_english</div><div class="t " style="left:58.60000000000002px;top:321.64px;font-size:12px;line-height:16px;color:#6d6d6d;transform:scaleX(0.9822);">Date modified:</div><div class="t " style="left:140.39999999999998px;top:321.64px;font-size:12px;line-height:16px;color:#000;transform:scaleX(0.965);">1/12/2020 11:25 AM</div><div class="t " style="left:358.70000000000005px;top:304.84px;font-size:12px;line-height:16px;color:#000;transform:scaleX(0.9898);">C:\Users\Bruce\Documents\My Games\Order of Bat...</div><div class="t " style="left:658.5px;top:304.84px;font-size:12px;line-height:16px;color:#6d6d6d;transform:scaleX(0.8056);">Size:</div><div class="t " style="left:685px;top:304.84px;font-size:12px;line-height:16px;color:#000;transform:scaleX(0.8758);">2.80 KB</div><div class="t " style="left:358.70000000000005px;top:321.64px;font-size:12px;line-height:16px;color:#000;transform:scaleX(0.9659);">/ NAME scenario_name = Fire Brigade Locomotive - Kollaa / DESCRIPTION scenario_descr = On the day the w...</div><div class="r" style="left:19px;top:391px;width:948px;height:1px;background:#e5e5e5;"></div><svg class="i" style="left:18px;top:351px;" width="33" height="28" viewBox="0 0 33 28">
<defs><pattern id="pg" width="2" height="2" patternUnits="userSpaceOnUse"><rect width="2" height="2" fill="#fff"/><rect width="1" height="1" fill="#888"/><rect x="1" y="1" width="1" height="1" fill="#888"/></pattern></defs>
<path d="M27.5 1.9H31.7Q33 1.9 33 3.2V26.7Q33 28 31.7 28H4.8L2 25.2V24.5H27.5Z" fill="#000"/>
<path d="M29 3.1H31.7V26.8H4.7L3.9 25.8H29Z" fill="url(#pg)"/>
<rect x="2" y="1.6" width="26.1" height="23.2" fill="#f00"/>
<path d="M3 1.4h25" stroke="#f00" stroke-width="1" stroke-dasharray="1 1"/>
<rect x="14.2" y="5.9" width="4.8" height="15.2" fill="#fff"/>
<rect x="9" y="11" width="15" height="5" fill="#fff"/>
<ellipse cx="3.2" cy="2.70" rx="2.3" ry="1.35" fill="#000"/><path d="M2 2.70H4.6" stroke="#fff" stroke-width="0.75"/><ellipse cx="3.2" cy="6.70" rx="2.3" ry="1.35" fill="#000"/><path d="M2 6.70H4.6" stroke="#fff" stroke-width="0.75"/><ellipse cx="3.2" cy="10.80" rx="2.3" ry="1.35" fill="#000"/><path d="M2 10.80H4.6" stroke="#fff" stroke-width="0.75"/><ellipse cx="3.2" cy="14.80" rx="2.3" ry="1.35" fill="#000"/><path d="M2 14.80H4.6" stroke="#fff" stroke-width="0.75"/><ellipse cx="3.2" cy="18.80" rx="2.3" ry="1.35" fill="#000"/><path d="M2 18.80H4.6" stroke="#fff" stroke-width="0.75"/><ellipse cx="3.2" cy="22.80" rx="2.3" ry="1.35" fill="#000"/><path d="M2 22.80H4.6" stroke="#fff" stroke-width="0.75"/>
</svg><div class="t " style="left:58.60000000000002px;top:350.47px;font-size:14.5px;line-height:19px;color:#000;transform:scaleX(0.9950);">text_english</div><div class="t " style="left:58.60000000000002px;top:369.64px;font-size:12px;line-height:16px;color:#6d6d6d;transform:scaleX(0.9822);">Date modified:</div><div class="t " style="left:140.39999999999998px;top:369.64px;font-size:12px;line-height:16px;color:#000;transform:scaleX(0.965);">1/12/2020 10:16 AM</div><div class="t " style="left:358.70000000000005px;top:352.84px;font-size:12px;line-height:16px;color:#000;transform:scaleX(0.9898);">C:\Users\Bruce\Documents\My Games\Order of Bat...</div><div class="t " style="left:658.5px;top:352.84px;font-size:12px;line-height:16px;color:#6d6d6d;transform:scaleX(0.8056);">Size:</div><div class="t " style="left:685px;top:352.84px;font-size:12px;line-height:16px;color:#000;transform:scaleX(0.8758);">2.71 KB</div><div class="t " style="left:358.70000000000005px;top:369.64px;font-size:12px;line-height:16px;color:#000;transform:scaleX(0.9599);">/ NAME scenario_name = Island on the Ice - Kotisaari Island / DESCRIPTION scenario_descr = Colonel Paavo T...</div><div class="r" style="left:19px;top:439px;width:948px;height:1px;background:#e5e5e5;"></div><svg class="i" style="left:18px;top:399px;" width="33" height="28" viewBox="0 0 33 28">
<defs><pattern id="pg" width="2" height="2" patternUnits="userSpaceOnUse"><rect width="2" height="2" fill="#fff"/><rect width="1" height="1" fill="#888"/><rect x="1" y="1" width="1" height="1" fill="#888"/></pattern></defs>
<path d="M27.5 1.9H31.7Q33 1.9 33 3.2V26.7Q33 28 31.7 28H4.8L2 25.2V24.5H27.5Z" fill="#000"/>
<path d="M29 3.1H31.7V26.8H4.7L3.9 25.8H29Z" fill="url(#pg)"/>
<rect x="2" y="1.6" width="26.1" height="23.2" fill="#f00"/>
<path d="M3 1.4h25" stroke="#f00" stroke-width="1" stroke-dasharray="1 1"/>
<rect x="14.2" y="5.9" width="4.8" height="15.2" fill="#fff"/>
<rect x="9" y="11" width="15" height="5" fill="#fff"/>
<ellipse cx="3.2" cy="2.70" rx="2.3" ry="1.35" fill="#000"/><path d="M2 2.70H4.6" stroke="#fff" stroke-width="0.75"/><ellipse cx="3.2" cy="6.70" rx="2.3" ry="1.35" fill="#000"/><path d="M2 6.70H4.6" stroke="#fff" stroke-width="0.75"/><ellipse cx="3.2" cy="10.80" rx="2.3" ry="1.35" fill="#000"/><path d="M2 10.80H4.6" stroke="#fff" stroke-width="0.75"/><ellipse cx="3.2" cy="14.80" rx="2.3" ry="1.35" fill="#000"/><path d="M2 14.80H4.6" stroke="#fff" stroke-width="0.75"/><ellipse cx="3.2" cy="18.80" rx="2.3" ry="1.35" fill="#000"/><path d="M2 18.80H4.6" stroke="#fff" stroke-width="0.75"/><ellipse cx="3.2" cy="22.80" rx="2.3" ry="1.35" fill="#000"/><path d="M2 22.80H4.6" stroke="#fff" stroke-width="0.75"/>
</svg><div class="t " style="left:58.60000000000002px;top:398.47px;font-size:14.5px;line-height:19px;color:#000;transform:scaleX(0.9950);">text_english</div><div class="t " style="left:58.60000000000002px;top:417.64px;font-size:12px;line-height:16px;color:#6d6d6d;transform:scaleX(0.9822);">Date modified:</div><div class="t " style="left:140.39999999999998px;top:417.64px;font-size:12px;line-height:16px;color:#000;transform:scaleX(0.965);">12/30/2019 11:06 AM</div><div class="t " style="left:358.70000000000005px;top:400.84px;font-size:12px;line-height:16px;color:#000;transform:scaleX(0.9898);">C:\Users\Bruce\Documents\My Games\Order of Bat...</div><div class="t " style="left:658.5px;top:400.84px;font-size:12px;line-height:16px;color:#6d6d6d;transform:scaleX(0.8056);">Size:</div><div class="t " style="left:685px;top:400.84px;font-size:12px;line-height:16px;color:#000;transform:scaleX(0.8758);">2.49 KB</div><div class="t " style="left:358.70000000000005px;top:417.64px;font-size:12px;line-height:16px;color:#000;transform:scaleX(0.9526);">/ NAME scenario_name = The God of War - Kelja / DESCRIPTION scenario_descr = The Soviet attack over the S...</div><div class="r" style="left:19px;top:487px;width:948px;height:1px;background:#e5e5e5;"></div><svg class="i" style="left:18px;top:447px;" width="33" height="28" viewBox="0 0 33 28">
<defs><pattern id="pg" width="2" height="2" patternUnits="userSpaceOnUse"><rect width="2" height="2" fill="#fff"/><rect width="1" height="1" fill="#888"/><rect x="1" y="1" width="1" height="1" fill="#888"/></pattern></defs>
<path d="M27.5 1.9H31.7Q33 1.9 33 3.2V26.7Q33 28 31.7 28H4.8L2 25.2V24.5H27.5Z" fill="#000"/>
<path d="M29 3.1H31.7V26.8H4.7L3.9 25.8H29Z" fill="url(#pg)"/>
<rect x="2" y="1.6" width="26.1" height="23.2" fill="#f00"/>
<path d="M3 1.4h25" stroke="#f00" stroke-width="1" stroke-dasharray="1 1"/>
<rect x="14.2" y="5.9" width="4.8" height="15.2" fill="#fff"/>
<rect x="9" y="11" width="15" height="5" fill="#fff"/>
<ellipse cx="3.2" cy="2.70" rx="2.3" ry="1.35" fill="#000"/><path d="M2 2.70H4.6" stroke="#fff" stroke-width="0.75"/><ellipse cx="3.2" cy="6.70" rx="2.3" ry="1.35" fill="#000"/><path d="M2 6.70H4.6" stroke="#fff" stroke-width="0.75"/><ellipse cx="3.2" cy="10.80" rx="2.3" ry="1.35" fill="#000"/><path d="M2 10.80H4.6" stroke="#fff" stroke-width="0.75"/><ellipse cx="3.2" cy="14.80" rx="2.3" ry="1.35" fill="#000"/><path d="M2 14.80H4.6" stroke="#fff" stroke-width="0.75"/><ellipse cx="3.2" cy="18.80" rx="2.3" ry="1.35" fill="#000"/><path d="M2 18.80H4.6" stroke="#fff" stroke-width="0.75"/><ellipse cx="3.2" cy="22.80" rx="2.3" ry="1.35" fill="#000"/><path d="M2 22.80H4.6" stroke="#fff" stroke-width="0.75"/>
</svg><div class="t " style="left:58.60000000000002px;top:446.47px;font-size:14.5px;line-height:19px;color:#000;transform:scaleX(0.9950);">text_english</div><div class="t " style="left:58.60000000000002px;top:465.64px;font-size:12px;line-height:16px;color:#6d6d6d;transform:scaleX(0.9822);">Date modified:</div><div class="t " style="left:140.39999999999998px;top:465.64px;font-size:12px;line-height:16px;color:#000;transform:scaleX(0.965);">12/30/2019 11:01 AM</div><div class="t " style="left:358.70000000000005px;top:448.84px;font-size:12px;line-height:16px;color:#000;transform:scaleX(0.9898);">C:\Users\Bruce\Documents\My Games\Order of Bat...</div><div class="t " style="left:658.5px;top:448.84px;font-size:12px;line-height:16px;color:#6d6d6d;transform:scaleX(0.8056);">Size:</div><div class="t " style="left:685px;top:448.84px;font-size:12px;line-height:16px;color:#000;transform:scaleX(0.8945);">2.11 KB</div><div class="t " style="left:358.70000000000005px;top:465.64px;font-size:12px;line-height:16px;color:#000;transform:scaleX(0.9659);">/ NAME scenario_name = Task Force Autti - Lemetti Road / DESCRIPTION scenario_descr = On December 11t...</div><div class="r" style="left:19px;top:535px;width:948px;height:1px;background:#e5e5e5;"></div><svg class="i" style="left:18px;top:495px;" width="33" height="28" viewBox="0 0 33 28">
<defs><pattern id="pg" width="2" height="2" patternUnits="userSpaceOnUse"><rect width="2" height="2" fill="#fff"/><rect width="1" height="1" fill="#888"/><rect x="1" y="1" width="1" height="1" fill="#888"/></pattern></defs>
<path d="M27.5 1.9H31.7Q33 1.9 33 3.2V26.7Q33 28 31.7 28H4.8L2 25.2V24.5H27.5Z" fill="#000"/>
<path d="M29 3.1H31.7V26.8H4.7L3.9 25.8H29Z" fill="url(#pg)"/>
<rect x="2" y="1.6" width="26.1" height="23.2" fill="#f00"/>
<path d="M3 1.4h25" stroke="#f00" stroke-width="1" stroke-dasharray="1 1"/>
<rect x="14.2" y="5.9" width="4.8" height="15.2" fill="#fff"/>
<rect x="9" y="11" width="15" height="5" fill="#fff"/>
<ellipse cx="3.2" cy="2.70" rx="2.3" ry="1.35" fill="#000"/><path d="M2 2.70H4.6" stroke="#fff" stroke-width="0.75"/><ellipse cx="3.2" cy="6.70" rx="2.3" ry="1.35" fill="#000"/><path d="M2 6.70H4.6" stroke="#fff" stroke-width="0.75"/><ellipse cx="3.2" cy="10.80" rx="2.3" ry="1.35" fill="#000"/><path d="M2 10.80H4.6" stroke="#fff" stroke-width="0.75"/><ellipse cx="3.2" cy="14.80" rx="2.3" ry="1.35" fill="#000"/><path d="M2 14.80H4.6" stroke="#fff" stroke-width="0.75"/><ellipse cx="3.2" cy="18.80" rx="2.3" ry="1.35" fill="#000"/><path d="M2 18.80H4.6" stroke="#fff" stroke-width="0.75"/><ellipse cx="3.2" cy="22.80" rx="2.3" ry="1.35" fill="#000"/><path d="M2 22.80H4.6" stroke="#fff" stroke-width="0.75"/>
</svg><div class="t " style="left:58.60000000000002px;top:494.47px;font-size:14.5px;line-height:19px;color:#000;transform:scaleX(0.9950);">text_english</div><div class="t " style="left:58.60000000000002px;top:513.64px;font-size:12px;line-height:16px;color:#6d6d6d;transform:scaleX(0.9822);">Date modified:</div><div class="t " style="left:140.39999999999998px;top:513.64px;font-size:12px;line-height:16px;color:#000;transform:scaleX(0.965);">12/30/2019 11:00 AM</div><div class="t " style="left:358.70000000000005px;top:496.84px;font-size:12px;line-height:16px;color:#000;transform:scaleX(0.9898);">C:\Users\Bruce\Documents\My Games\Order of Bat...</div><div class="t " style="left:658.5px;top:496.84px;font-size:12px;line-height:16px;color:#6d6d6d;transform:scaleX(0.8056);">Size:</div><div class="t " style="left:685px;top:496.84px;font-size:12px;line-height:16px;color:#000;transform:scaleX(0.8758);">2.66 KB</div><div class="t " style="left:358.70000000000005px;top:513.64px;font-size:12px;line-height:16px;color:#000;transform:scaleX(0.9557);">/ NAME scenario_name = Encounter at Kotajärvi / DESCRIPTION scenario_descr = The strong Russian advance...</div><div class="r" style="left:19px;top:583px;width:948px;height:1px;background:#e5e5e5;"></div><svg class="i" style="left:18px;top:543px;" width="33" height="28" viewBox="0 0 33 28">
<defs><pattern id="pg" width="2" height="2" patternUnits="userSpaceOnUse"><rect width="2" height="2" fill="#fff"/><rect width="1" height="1" fill="#888"/><rect x="1" y="1" width="1" height="1" fill="#888"/></pattern></defs>
<path d="M27.5 1.9H31.7Q33 1.9 33 3.2V26.7Q33 28 31.7 28H4.8L2 25.2V24.5H27.5Z" fill="#000"/>
<path d="M29 3.1H31.7V26.8H4.7L3.9 25.8H29Z" fill="url(#pg)"/>
<rect x="2" y="1.6" width="26.1" height="23.2" fill="#f00"/>
<path d="M3 1.4h25" stroke="#f00" stroke-width="1" stroke-dasharray="1 1"/>
<rect x="14.2" y="5.9" width="4.8" height="15.2" fill="#fff"/>
<rect x="9" y="11" width="15" height="5" fill="#fff"/>
<ellipse cx="3.2" cy="2.70" rx="2.3" ry="1.35" fill="#000"/><path d="M2 2.70H4.6" stroke="#fff" stroke-width="0.75"/><ellipse cx="3.2" cy="6.70" rx="2.3" ry="1.35" fill="#000"/><path d="M2 6.70H4.6" stroke="#fff" stroke-width="0.75"/><ellipse cx="3.2" cy="10.80" rx="2.3" ry="1.35" fill="#000"/><path d="M2 10.80H4.6" stroke="#fff" stroke-width="0.75"/><ellipse cx="3.2" cy="14.80" rx="2.3" ry="1.35" fill="#000"/><path d="M2 14.80H4.6" stroke="#fff" stroke-width="0.75"/><ellipse cx="3.2" cy="18.80" rx="2.3" ry="1.35" fill="#000"/><path d="M2 18.80H4.6" stroke="#fff" stroke-width="0.75"/><ellipse cx="3.2" cy="22.80" rx="2.3" ry="1.35" fill="#000"/><path d="M2 22.80H4.6" stroke="#fff" stroke-width="0.75"/>
</svg><div class="t " style="left:58.60000000000002px;top:542.47px;font-size:14.5px;line-height:19px;color:#000;transform:scaleX(0.9950);">text_english</div><div class="t " style="left:58.60000000000002px;top:561.64px;font-size:12px;line-height:16px;color:#6d6d6d;transform:scaleX(0.9822);">Date modified:</div><div class="t " style="left:140.39999999999998px;top:561.64px;font-size:12px;line-height:16px;color:#000;transform:scaleX(0.965);">12/30/2019 10:58 AM</div><div class="t " style="left:358.70000000000005px;top:544.84px;font-size:12px;line-height:16px;color:#000;transform:scaleX(0.9898);">C:\Users\Bruce\Documents\My Games\Order of Bat...</div><div class="t " style="left:658.5px;top:544.84px;font-size:12px;line-height:16px;color:#6d6d6d;transform:scaleX(0.8056);">Size:</div><div class="t " style="left:685px;top:544.84px;font-size:12px;line-height:16px;color:#000;transform:scaleX(0.8758);">2.72 KB</div><div class="t " style="left:358.70000000000005px;top:561.64px;font-size:12px;line-height:16px;color:#000;transform:scaleX(0.9508);">/ NAME scenario_name = The Sausage War - Raate-Suomussalmi Road / DESCRIPTION scenario_descr = The ...</div><div class="r" style="left:19px;top:631px;width:948px;height:1px;background:#e5e5e5;"></div><svg class="i" style="left:18px;top:591px;" width="33" height="28" viewBox="0 0 33 28">
<defs><pattern id="pg" width="2" height="2" patternUnits="userSpaceOnUse"><rect width="2" height="2" fill="#fff"/><rect width="1" height="1" fill="#888"/><rect x="1" y="1" width="1" height="1" fill="#888"/></pattern></defs>
<path d="M27.5 1.9H31.7Q33 1.9 33 3.2V26.7Q33 28 31.7 28H4.8L2 25.2V24.5H27.5Z" fill="#000"/>
<path d="M29 3.1H31.7V26.8H4.7L3.9 25.8H29Z" fill="url(#pg)"/>
<rect x="2" y="1.6" width="26.1" height="23.2" fill="#f00"/>
<path d="M3 1.4h25" stroke="#f00" stroke-width="1" stroke-dasharray="1 1"/>
<rect x="14.2" y="5.9" width="4.8" height="15.2" fill="#fff"/>
<rect x="9" y="11" width="15" height="5" fill="#fff"/>
<ellipse cx="3.2" cy="2.70" rx="2.3" ry="1.35" fill="#000"/><path d="M2 2.70H4.6" stroke="#fff" stroke-width="0.75"/><ellipse cx="3.2" cy="6.70" rx="2.3" ry="1.35" fill="#000"/><path d="M2 6.70H4.6" stroke="#fff" stroke-width="0.75"/><ellipse cx="3.2" cy="10.80" rx="2.3" ry="1.35" fill="#000"/><path d="M2 10.80H4.6" stroke="#fff" stroke-width="0.75"/><ellipse cx="3.2" cy="14.80" rx="2.3" ry="1.35" fill="#000"/><path d="M2 14.80H4.6" stroke="#fff" stroke-width="0.75"/><ellipse cx="3.2" cy="18.80" rx="2.3" ry="1.35" fill="#000"/><path d="M2 18.80H4.6" stroke="#fff" stroke-width="0.75"/><ellipse cx="3.2" cy="22.80" rx="2.3" ry="1.35" fill="#000"/><path d="M2 22.80H4.6" stroke="#fff" stroke-width="0.75"/>
</svg><div class="t " style="left:58.60000000000002px;top:590.47px;font-size:14.5px;line-height:19px;color:#000;transform:scaleX(0.9950);">text_english</div><div class="t " style="left:58.60000000000002px;top:609.64px;font-size:12px;line-height:16px;color:#6d6d6d;transform:scaleX(0.9822);">Date modified:</div><div class="t " style="left:140.39999999999998px;top:609.64px;font-size:12px;line-height:16px;color:#000;transform:scaleX(0.965);">12/30/2019 10:55 AM</div><div class="t " style="left:358.70000000000005px;top:592.84px;font-size:12px;line-height:16px;color:#000;transform:scaleX(0.9898);">C:\Users\Bruce\Documents\My Games\Order of Bat...</div><div class="t " style="left:658.5px;top:592.84px;font-size:12px;line-height:16px;color:#6d6d6d;transform:scaleX(0.8056);">Size:</div><div class="t " style="left:685px;top:592.84px;font-size:12px;line-height:16px;color:#000;transform:scaleX(0.8758);">2.15 KB</div><div class="t " style="left:358.70000000000005px;top:609.64px;font-size:12px;line-height:16px;color:#000;transform:scaleX(0.9686);">/ NAME scenario_name = White Death at Petsamo / DESCRIPTION scenario_descr = \When the elements of th...</div><div class="r" style="left:19px;top:679px;width:948px;height:1px;background:#e5e5e5;"></div><svg class="i" style="left:18px;top:639px;" width="33" height="28" viewBox="0 0 33 28">
<defs><pattern id="pg" width="2" height="2" patternUnits="userSpaceOnUse"><rect width="2" height="2" fill="#fff"/><rect width="1" height="1" fill="#888"/><rect x="1" y="1" width="1" height="1" fill="#888"/></pattern></defs>
<path d="M27.5 1.9H31.7Q33 1.9 33 3.2V26.7Q33 28 31.7 28H4.8L2 25.2V24.5H27.5Z" fill="#000"/>
<path d="M29 3.1H31.7V26.8H4.7L3.9 25.8H29Z" fill="url(#pg)"/>
<rect x="2" y="1.6" width="26.1" height="23.2" fill="#f00"/>
<path d="M3 1.4h25" stroke="#f00" stroke-width="1" stroke-dasharray="1 1"/>
<rect x="14.2" y="5.9" width="4.8" height="15.2" fill="#fff"/>
<rect x="9" y="11" width="15" height="5" fill="#fff"/>
<ellipse cx="3.2" cy="2.70" rx="2.3" ry="1.35" fill="#000"/><path d="M2 2.70H4.6" stroke="#fff" stroke-width="0.75"/><ellipse cx="3.2" cy="6.70" rx="2.3" ry="1.35" fill="#000"/><path d="M2 6.70H4.6" stroke="#fff" stroke-width="0.75"/><ellipse cx="3.2" cy="10.80" rx="2.3" ry="1.35" fill="#000"/><path d="M2 10.80H4.6" stroke="#fff" stroke-width="0.75"/><ellipse cx="3.2" cy="14.80" rx="2.3" ry="1.35" fill="#000"/><path d="M2 14.80H4.6" stroke="#fff" stroke-width="0.75"/><ellipse cx="3.2" cy="18.80" rx="2.3" ry="1.35" fill="#000"/><path d="M2 18.80H4.6" stroke="#fff" stroke-width="0.75"/><ellipse cx="3.2" cy="22.80" rx="2.3" ry="1.35" fill="#000"/><path d="M2 22.80H4.6" stroke="#fff" stroke-width="0.75"/>
</svg><div class="t " style="left:58.60000000000002px;top:638.47px;font-size:14.5px;line-height:19px;color:#000;transform:scaleX(0.9950);">text_english</div><div class="t " style="left:58.60000000000002px;top:657.64px;font-size:12px;line-height:16px;color:#6d6d6d;transform:scaleX(0.9822);">Date modified:</div><div class="t " style="left:140.39999999999998px;top:657.64px;font-size:12px;line-height:16px;color:#000;transform:scaleX(0.965);">12/30/2019 10:52 AM</div><div class="t " style="left:358.70000000000005px;top:640.84px;font-size:12px;line-height:16px;color:#000;transform:scaleX(0.9898);">C:\Users\Bruce\Documents\My Games\Order of Bat...</div><div class="t " style="left:658.5px;top:640.84px;font-size:12px;line-height:16px;color:#6d6d6d;transform:scaleX(0.8056);">Size:</div><div class="t " style="left:685px;top:640.84px;font-size:12px;line-height:16px;color:#000;transform:scaleX(0.8758);">3.26 KB</div><div class="t " style="left:358.70000000000005px;top:657.64px;font-size:12px;line-height:16px;color:#000;transform:scaleX(0.9723);">/ NAME scenario_name = Buying Time with Blood - Salla-Kemijarvi Road / DESCRIPTION scenario_descr = W...</div><div class="r" style="left:19px;top:727px;width:948px;height:1px;background:#e5e5e5;"></div><svg class="i" style="left:18px;top:687px;" width="33" height="28" viewBox="0 0 33 28">
<defs><pattern id="pg" width="2" height="2" patternUnits="userSpaceOnUse"><rect width="2" height="2" fill="#fff"/><rect width="1" height="1" fill="#888"/><rect x="1" y="1" width="1" height="1" fill="#888"/></pattern></defs>
<path d="M27.5 1.9H31.7Q33 1.9 33 3.2V26.7Q33 28 31.7 28H4.8L2 25.2V24.5H27.5Z" fill="#000"/>
<path d="M29 3.1H31.7V26.8H4.7L3.9 25.8H29Z" fill="url(#pg)"/>
<rect x="2" y="1.6" width="26.1" height="23.2" fill="#f00"/>
<path d="M3 1.4h25" stroke="#f00" stroke-width="1" stroke-dasharray="1 1"/>
<rect x="14.2" y="5.9" width="4.8" height="15.2" fill="#fff"/>
<rect x="9" y="11" width="15" height="5" fill="#fff"/>
<ellipse cx="3.2" cy="2.70" rx="2.3" ry="1.35" fill="#000"/><path d="M2 2.70H4.6" stroke="#fff" stroke-width="0.75"/><ellipse cx="3.2" cy="6.70" rx="2.3" ry="1.35" fill="#000"/><path d="M2 6.70H4.6" stroke="#fff" stroke-width="0.75"/><ellipse cx="3.2" cy="10.80" rx="2.3" ry="1.35" fill="#000"/><path d="M2 10.80H4.6" stroke="#fff" stroke-width="0.75"/><ellipse cx="3.2" cy="14.80" rx="2.3" ry="1.35" fill="#000"/><path d="M2 14.80H4.6" stroke="#fff" stroke-width="0.75"/><ellipse cx="3.2" cy="18.80" rx="2.3" ry="1.35" fill="#000"/><path d="M2 18.80H4.6" stroke="#fff" stroke-width="0.75"/><ellipse cx="3.2" cy="22.80" rx="2.3" ry="1.35" fill="#000"/><path d="M2 22.80H4.6" stroke="#fff" stroke-width="0.75"/>
</svg><div class="t " style="left:58.60000000000002px;top:686.47px;font-size:14.5px;line-height:19px;color:#000;transform:scaleX(0.9950);">text_english</div><div class="t " style="left:58.60000000000002px;top:705.64px;font-size:12px;line-height:16px;color:#6d6d6d;transform:scaleX(0.9822);">Date modified:</div><div class="t " style="left:140.39999999999998px;top:705.64px;font-size:12px;line-height:16px;color:#000;transform:scaleX(0.965);">12/30/2019 10:44 AM</div><div class="t " style="left:358.70000000000005px;top:688.84px;font-size:12px;line-height:16px;color:#000;transform:scaleX(0.9898);">C:\Users\Bruce\Documents\My Games\Order of Bat...</div><div class="t " style="left:658.5px;top:688.84px;font-size:12px;line-height:16px;color:#6d6d6d;transform:scaleX(0.8056);">Size:</div><div class="t " style="left:685px;top:688.84px;font-size:12px;line-height:16px;color:#000;transform:scaleX(0.8758);">2.25 KB</div><div class="t " style="left:358.70000000000005px;top:705.64px;font-size:12px;line-height:16px;color:#000;transform:scaleX(0.9659);">/ NAME scenario_name = Tightening the Noose - Suomussalmi village / DESCRIPTION scenario_descr = 163rd...</div><div class="r" style="left:19px;top:775px;width:948px;height:1px;background:#e5e5e5;"></div><svg class="i" style="left:18px;top:735px;" width="33" height="28" viewBox="0 0 33 28">
<defs><pattern id="pg" width="2" height="2" patternUnits="userSpaceOnUse"><rect width="2" height="2" fill="#fff"/><rect width="1" height="1" fill="#888"/><rect x="1" y="1" width="1" height="1" fill="#888"/></pattern></defs>
<path d="M27.5 1.9H31.7Q33 1.9 33 3.2V26.7Q33 28 31.7 28H4.8L2 25.2V24.5H27.5Z" fill="#000"/>
<path d="M29 3.1H31.7V26.8H4.7L3.9 25.8H29Z" fill="url(#pg)"/>
<rect x="2" y="1.6" width="26.1" height="23.2" fill="#f00"/>
<path d="M3 1.4h25" stroke="#f00" stroke-width="1" stroke-dasharray="1 1"/>
<rect x="14.2" y="5.9" width="4.8" height="15.2" fill="#fff"/>
<rect x="9" y="11" width="15" height="5" fill="#fff"/>
<ellipse cx="3.2" cy="2.70" rx="2.3" ry="1.35" fill="#000"/><path d="M2 2.70H4.6" stroke="#fff" stroke-width="0.75"/><ellipse cx="3.2" cy="6.70" rx="2.3" ry="1.35" fill="#000"/><path d="M2 6.70H4.6" stroke="#fff" stroke-width="0.75"/><ellipse cx="3.2" cy="10.80" rx="2.3" ry="1.35" fill="#000"/><path d="M2 10.80H4.6" stroke="#fff" stroke-width="0.75"/><ellipse cx="3.2" cy="14.80" rx="2.3" ry="1.35" fill="#000"/><path d="M2 14.80H4.6" stroke="#fff" stroke-width="0.75"/><ellipse cx="3.2" cy="18.80" rx="2.3" ry="1.35" fill="#000"/><path d="M2 18.80H4.6" stroke="#fff" stroke-width="0.75"/><ellipse cx="3.2" cy="22.80" rx="2.3" ry="1.35" fill="#000"/><path d="M2 22.80H4.6" stroke="#fff" stroke-width="0.75"/>
</svg><div class="t " style="left:58.60000000000002px;top:734.47px;font-size:14.5px;line-height:19px;color:#000;transform:scaleX(0.9950);">text_english</div><div class="t " style="left:58.60000000000002px;top:753.64px;font-size:12px;line-height:16px;color:#6d6d6d;transform:scaleX(0.9822);">Date modified:</div><div class="t " style="left:140.39999999999998px;top:753.64px;font-size:12px;line-height:16px;color:#000;transform:scaleX(0.965);">12/30/2019 10:38 AM</div><div class="t " style="left:358.70000000000005px;top:736.84px;font-size:12px;line-height:16px;color:#000;transform:scaleX(0.9898);">C:\Users\Bruce\Documents\My Games\Order of Bat...</div><div class="t " style="left:658.5px;top:736.84px;font-size:12px;line-height:16px;color:#6d6d6d;transform:scaleX(0.8056);">Size:</div><div class="t " style="left:685px;top:736.84px;font-size:12px;line-height:16px;color:#000;transform:scaleX(0.8758);">2.19 KB</div><div class="t " style="left:358.70000000000005px;top:753.64px;font-size:12px;line-height:16px;color:#000;transform:scaleX(0.9400);">/ NAME scenario_name = Counterattack at Uomaa Road / DESCRIPTION scenario_descr = General Headquarters...</div></div><div class="r" style="left:1259px;top:182px;width:15px;height:758px;background:#f0f0f0;"></div><div class="r" style="left:1259px;top:199px;width:15px;height:601px;background:#cdcdcd;"></div><svg class="i" style="left:1262.5px;top:188px;" width="8" height="7" viewBox="0 0 8 7"><path d="M0.6 5.6L3.8 1.6 7 5.6" fill="none" stroke="#555" stroke-width="2"/></svg><svg class="i" style="left:1262.5px;top:928.5px;" width="8" height="7" viewBox="0 0 8 7"><path d="M0.6 0.8L3.8 4.8 7 0.8" fill="none" stroke="#555" stroke-width="2"/></svg><div class="t " style="left:15.9px;top:943.84px;font-size:12px;line-height:16px;color:#1e1e1e;transform:scaleX(0.9414);">19 items</div><div class="r" style="left:69px;top:946px;width:1px;height:11px;background:#ebebeb;"></div><div class="t " style="left:80.2px;top:943.84px;font-size:12px;line-height:16px;color:#1e1e1e;transform:scaleX(0.9601);">1 item selected</div><div class="t " style="left:164px;top:943.84px;font-size:12px;line-height:16px;color:#1e1e1e;transform:scaleX(0.9086);">2.18 KB</div><div class="r" style="left:213px;top:946px;width:1px;height:11px;background:#ebebeb;"></div><svg class="i" style="left:1230px;top:944px;" width="17" height="13" viewBox="0 0 17 13"><rect x="0.5" y="0.5" width="4" height="12" fill="#fff" stroke="#888"/><circle cx="2.5" cy="2.5" r="0.8" fill="#3a8a8a"/><circle cx="2.5" cy="6.5" r="0.8" fill="#3a8ae8"/><circle cx="2.5" cy="10.5" r="0.8" fill="#e02020"/><path d="M6 2.5h4M12 2.5h4M6 6.5h4M12 6.5h4M6 10.5h4M12 10.5h4" stroke="#666" stroke-width="1"/></svg><svg class="i" style="left:1253px;top:945px;" width="14" height="11" viewBox="0 0 14 11"><rect x="0.5" y="0.5" width="13" height="10" fill="#fff" stroke="#888"/><rect x="2" y="2" width="10" height="7" fill="#4a9ae8"/><path d="M2 6c3-1 5 0 10 1v2h-10z" fill="#3a6a4a"/></svg><div class="r" style="left:0px;top:0px;width:1px;height:964px;background:#0063b1;"></div><div class="r" style="left:1275px;top:0px;width:1px;height:964px;background:#0063b1;"></div><div class="r" style="left:0px;top:963px;width:1276px;height:1px;background:#0063b1;"></div>
</div>
</body></html>
